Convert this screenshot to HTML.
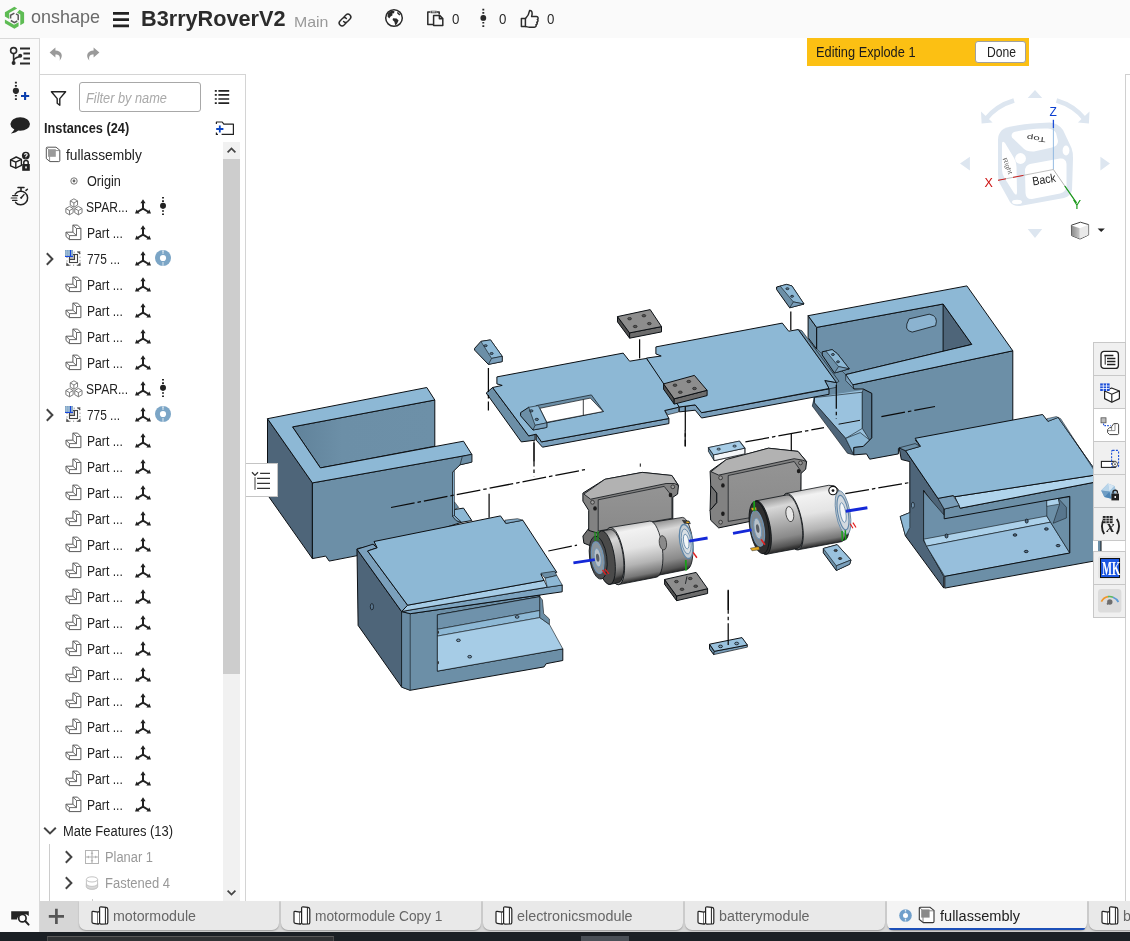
<!DOCTYPE html>
<html lang="en"><head><meta charset="utf-8"><title>B3rryRoverV2 | fullassembly</title>
<style>
*{box-sizing:border-box}
html,body{margin:0;padding:0}
body{width:1130px;height:941px;overflow:hidden;position:relative;background:#fff;font-family:"Liberation Sans",sans-serif;font-size:14px;color:#222}
.abs{position:absolute}
.t{position:absolute;white-space:nowrap;transform-origin:0 0;line-height:16px;display:block}
#hdr{position:absolute;left:0;top:0;width:1130px;height:38px;background:#fafafa}
#side{position:absolute;left:0;top:38px;width:40px;height:894px;background:#fafafa;border-right:1px solid #d9d9d9}
#panel{position:absolute;left:40px;top:74px;width:206px;height:827px;border-top:1px solid #d4d4d4;border-right:1px solid #d4d4d4;background:#fff;overflow:hidden}
#tabs{position:absolute;left:40px;top:901px;width:1090px;height:31px;background:#d6d6d6}
#taskbar{position:absolute;left:0;top:932px;width:1130px;height:9px;background:#1b2025}
.tab{position:absolute;top:0;height:29px;background:#e9e9e9;border-radius:0 0 7px 7px;box-shadow:0 1px 1px rgba(0,0,0,.25)}
svg{position:absolute;overflow:visible}
#root{position:absolute;left:0;top:0;width:1130px;height:941px;will-change:transform;overflow:hidden}

</style></head>
<body><div id="root">
<div id="hdr">
<svg style="left:0;top:0" width="60" height="38" viewBox="0 0 60 38">
 <g fill="#5cb85c" fill-opacity=".98">
  <path d="M14.4 6.8 L17.2 8.4 L9.2 13 L9.2 19 L4.9 16.6 L4.9 12.3 Z" fill="#5bbb51"/>
  <path d="M19.5 9.8 L24.1 12.4 L24.1 23.1 L20.3 25.3 L20.3 14.6 L17 12.7 Z" fill="#5bbb51"/>
  <path d="M4.9 19.6 L14 24.8 L18.6 22.2 L18.6 26.3 L14.4 28.7 L4.9 23.2 Z" fill="#5bbb51"/>
 </g>
 <g fill="none" stroke="#5a5a5a" stroke-width="1.5">
  <path d="M10.6 18.6 L10.6 15.3 L14.4 13.1"/>
  <path d="M16 13.9 L18.2 15.2 L18.2 20.2"/>
  <path d="M17.2 21 L14.4 22.6 L10.8 20.5"/>
 </g>
</svg>
<span class="t" id="logo-t" style="left:31px;top:5px;font-size:18.5px;line-height:24px;color:#6a6a6a;transform:scaleX(.972)">onshape</span>
<svg style="left:112px;top:11px" width="18" height="18" viewBox="0 0 18 18"><path d="M1 2.4h16M1 8.6h16M1 14.8h16" stroke="#222" stroke-width="2.8"/></svg>
<span class="t" id="title-t" style="left:141px;top:6px;font-size:22px;line-height:26px;font-weight:bold;color:#2b2b2b;transform:scaleX(.985)">B3rryRoverV2</span>
<span class="t" id="main-t" style="left:294px;top:12.5px;font-size:15px;line-height:18px;color:#999;transform:scaleX(1.06)">Main</span>
<svg style="left:337px;top:12px" width="16" height="16" viewBox="0 0 16 16" fill="none" stroke="#2b2b2b" stroke-width="1.45" stroke-linecap="round">
 <path d="M7 4.9 L8.9 3 A2.9 2.9 0 0 1 13 7.1 L10.6 9.5 A2.9 2.9 0 0 1 6.6 9.5"/>
 <path d="M9 11.1 L7.1 13 A2.9 2.9 0 0 1 3 8.9 L5.4 6.5 A2.9 2.9 0 0 1 9.4 6.5"/>
</svg>
<svg style="left:384px;top:8px" width="20" height="20" viewBox="0 0 20 20">
 <circle cx="10" cy="10" r="8.3" fill="#fff" stroke="#2b2b2b" stroke-width="1.5"/>
 <path d="M4.2 5 L7.5 2.6 L10.6 3.2 L10 5.2 L8.2 5.6 L8.6 7.2 L6.6 8.4 L5.2 10.4 L3.4 8.2 Z" fill="#2b2b2b"/>
 <path d="M9 10.2 L12.6 10.6 L14.6 12.6 L12.8 16.2 L11.2 17.2 L10.4 13.8 L8.6 12 Z" fill="#2b2b2b"/>
 <path d="M13.4 3.6 L16.4 6.4 L15.4 7.4 L13.2 5.6 Z" fill="#2b2b2b"/>
</svg>
<svg style="left:426px;top:9px" width="19" height="18" viewBox="0 0 19 18" fill="none" stroke="#2b2b2b" stroke-width="1.5" stroke-linejoin="round">
 <path d="M7.4 15.4 H1.8 V3 H4.2 M11 3 H13.2 V5.4"/>
 <rect x="4.6" y="1.8" width="6" height="2.4" fill="#2b2b2b" stroke="none"/>
 <rect x="5.6" y="2.4" width="4" height="1" fill="#fafafa" stroke="none"/>
 <path d="M7.6 6.4 H13.6 L16.8 9.6 V16.4 H7.6 Z" fill="#fafafa"/>
 <path d="M13.4 6.6 V9.8 H16.6"/>
</svg>
<span class="t" style="left:452px;top:11px;font-size:14px;color:#2b2b2b;transform:scaleX(.95)">0</span>
<svg style="left:478px;top:8px" width="10" height="20" viewBox="0 0 10 20"><path d="M5.3 0.8V19" stroke="#2b2b2b" stroke-width="1.9" stroke-dasharray="1.6 1.7"/><circle cx="5.3" cy="9.9" r="2.9" fill="#2b2b2b"/></svg>
<span class="t" style="left:499px;top:11px;font-size:14px;color:#2b2b2b;transform:scaleX(.95)">0</span>
<svg style="left:519px;top:8px" width="22" height="22" viewBox="0 0 22 22" fill="none" stroke="#2b2b2b" stroke-width="1.5" stroke-linejoin="round" stroke-linecap="round">
 <path d="M6.4 10.6 V18.6 H2.4 V10.6 Z"/>
 <path d="M6.4 10.6 C8.6 8.6 10 6.4 10.6 2.6 C13 2.2 13.8 4.6 12.6 8.6 H17.4 C19.4 8.6 19.6 11 18.4 11.4 C19.4 12.2 19.2 13.8 17.8 14.2 C18.6 15.2 18.2 16.6 17 16.8 C17.6 18 16.8 19.2 15.4 19.2 H10.4 C8.8 19.2 7.8 18.6 6.4 18.6"/>
</svg>
<span class="t" style="left:547px;top:11px;font-size:14px;color:#2b2b2b;transform:scaleX(.95)">0</span>
</div>

<div id="side" style="border-top:1px solid #d9d9d9"></div>
<!-- sidebar icons -->
<svg style="left:9px;top:46px" width="22" height="20" viewBox="0 0 22 20" fill="none" stroke="#2a2a2a">
 <circle cx="4.6" cy="4.6" r="3" stroke-width="1.6" fill="#fafafa"/>
 <path d="M4.6 7.8 V16.4" stroke-width="1.6"/>
 <circle cx="4.6" cy="17" r="2" fill="#2a2a2a" stroke="none"/>
 <path d="M4.7 14.6 C4.9 12 7.4 11.4 10.4 10.6" stroke-width="1.6"/>
 <circle cx="11.2" cy="9.8" r="2" fill="#2a2a2a" stroke="none"/>
 <path d="M11 2.6 H21 M14.4 7.4 H21 M14.4 12.4 H21 M11 17.4 H21" stroke-width="2"/>
</svg>
<svg style="left:9px;top:80px" width="22" height="22" viewBox="0 0 22 22">
 <path d="M6.9 1.8 V20.2" stroke="#2a2a2a" stroke-width="2" stroke-dasharray="1.6 1.7"/>
 <circle cx="6.9" cy="10.8" r="3.1" fill="#2a2a2a"/>
 <path d="M12 16 H20.2 M16.1 11.9 V20.1" stroke="#0b3fae" stroke-width="2.1"/>
</svg>
<svg style="left:9px;top:116px" width="22" height="20" viewBox="0 0 22 20">
 <ellipse cx="11.2" cy="8" rx="9.8" ry="6.8" fill="#222"/>
 <path d="M5.6 11.6 C5.4 14.4 3.8 16.2 1.8 17.6 C5.6 17.4 8.4 15.8 10 13.6 Z" fill="#222"/>
</svg>
<svg style="left:9px;top:150px" width="23" height="22" viewBox="0 0 23 22" fill="none" stroke="#222" stroke-width="1.4" stroke-linejoin="round">
 <path d="M1.6 9.8 L7.2 7 L12.4 9.4 L12.4 15.4 L6.8 18.2 L1.6 15.8 Z"/>
 <path d="M1.6 9.8 L6.8 12.2 L12.4 9.4 M6.8 12.2 V18.2"/>
 <circle cx="16.8" cy="5.6" r="3.9" fill="#222" stroke="none"/>
 <path d="M15.5 4.8 C15.5 3.2 18.2 3.2 18.2 4.8 C18.2 5.8 16.8 5.8 16.8 6.9 M16.8 7.8 V8.2" stroke="#fafafa" stroke-width="1.1"/>
 <rect x="13.2" y="14" width="7.6" height="6.8" fill="#222" stroke="none"/>
 <path d="M14.8 14 V12.4 C14.8 10 19.2 10 19.2 12.4 V14" stroke-width="1.5"/>
 <rect x="16.2" y="16.4" width="1.6" height="2" fill="#fafafa" stroke="none"/>
</svg>
<svg style="left:9px;top:185px" width="22" height="22" viewBox="0 0 22 22" fill="none" stroke="#222" stroke-width="1.5" stroke-linecap="round">
 <path d="M6.2 9.2 A6.8 6.8 0 1 1 6.6 17.4"/>
 <path d="M9 2.6 H15 M12 2.8 V5.6 M17 5.4 L18.4 4.2"/>
 <path d="M12.2 12.8 L15 9.6" stroke-width="1.4"/>
 <circle cx="12.2" cy="12.8" r="1" fill="#222" stroke="none"/>
 <path d="M3.6 10.6 H8.6 M2.2 13 H7.8 M3.6 15.4 H8" stroke-width="1.2"/>
</svg>
<!-- bottom-left search icon -->
<svg style="left:9px;top:905px" width="24" height="22" viewBox="0 0 24 22">
 <path d="M2.2 6.2 H19.8 V11 L17.6 9.6 H11.6 L8.2 13 V14.4 H2.2 Z" fill="#222"/>
 <circle cx="13.4" cy="13.2" r="3.7" fill="#fafafa" stroke="#222" stroke-width="1.7"/>
 <path d="M16.2 16 L19.6 19.6" stroke="#222" stroke-width="2" stroke-linecap="round"/>
</svg>
<!-- undo / redo -->
<svg style="left:48px;top:46px" width="18" height="18" viewBox="0 0 18 18"><path d="M7.4 1.6 L1.6 6.6 L7.4 11.4 V8.4 C11 8.2 12.6 10.2 11.6 14.8 C16 9.6 13.4 4.8 7.4 4.6 Z" fill="#9a9a9a"/></svg>
<svg style="left:83px;top:46px" width="18" height="18" viewBox="0 0 18 18"><path d="M10.6 1.6 L16.4 6.6 L10.6 11.4 V8.4 C7 8.2 5.4 10.2 6.4 14.8 C2 9.6 4.6 4.8 10.6 4.6 Z" fill="#9a9a9a"/></svg>

<div id="panel">
<svg style="left:9px;top:14px" width="19" height="19" viewBox="0 0 19 19" ><path d="M2.4 2.7 H16.6 L10.8 9.6 V16.2 L8.2 14.2 V9.6 Z" fill="none" stroke="#222" stroke-width="1.4" stroke-linejoin="round"/></svg>
<div class="abs" style="left:39px;top:7px;width:122px;height:30px;border:1px solid #a8a8a8;border-radius:3px;background:#fff"></div>
<span class="t" style="left:46.0px;top:15.00px;font-size:14px;line-height:16px;color:#a9a9a9;font-weight:normal;font-style:italic;transform:scaleX(0.913)">Filter by name</span>
<svg style="left:173px;top:13px" width="18" height="18" viewBox="0 0 18 18" ><path d="M5.4 2.8 H16.2 M5.4 6.9 H16.2 M5.4 11 H16.2 M5.4 15.1 H16.2" stroke="#222" stroke-width="1.7"/><path d="M1.8 2.8 H3.8 M1.8 6.9 H3.8 M1.8 11 H3.8 M1.8 15.1 H3.8" stroke="#222" stroke-width="1.7"/></svg>
<span class="t" style="left:4.0px;top:45.00px;font-size:14px;line-height:16px;color:#222;font-weight:bold;font-style:normal;transform:scaleX(0.912)">Instances (24)</span>
<svg style="left:174px;top:44px" width="22" height="18" viewBox="0 0 22 18" ><path d="M2.4 5 V3 H8.2 L9.8 5.2 H19.4 V15.4 H7.6" fill="none" stroke="#222" stroke-width="1.2" stroke-linejoin="round"/><path d="M2.4 13.4 V15.4 H4" fill="none" stroke="#222" stroke-width="1.2"/><path d="M2.2 10 H9.4 M5.8 6.4 V13.6" stroke="#0b45c4" stroke-width="1.8"/></svg>
<div class="abs" style="left:183px;top:67px;width:17px;height:759px;background:#f1f1f1"></div>
<div class="abs" style="left:183px;top:84px;width:17px;height:515px;background:#cdcdcd"></div>
<svg style="left:183px;top:67px" width="17" height="17" viewBox="0 0 17 17" ><path d="M4.6 10.4 L8.5 6.4 L12.4 10.4" fill="none" stroke="#444" stroke-width="1.7"/></svg>
<svg style="left:183px;top:809px" width="17" height="17" viewBox="0 0 17 17" ><path d="M4.6 6.6 L8.5 10.6 L12.4 6.6" fill="none" stroke="#444" stroke-width="1.7"/></svg>
<svg style="left:5px;top:71px" width="17" height="17" viewBox="0 0 17 17" ><path d="M1.3 2.2 Q1.3 1.2 2.4 1.2 H11 L14.8 4.2 V14.6 Q14.8 15.6 13.8 15.6 H5 L1.3 12.6 Z" fill="#fff" stroke="#555" stroke-width="1"/><path d="M4.6 4.6 H14.6 M4.6 4.6 V15.4 M4.6 4.6 L1.6 1.6" fill="none" stroke="#777" stroke-width=".8"/><rect x="3" y="3.2" width="7.8" height="7.6" fill="#9a9a9a"/></svg>
<span class="t" style="left:26.0px;top:72.00px;font-size:14px;line-height:16px;color:#222;font-weight:normal;font-style:normal;transform:scaleX(0.984)">fullassembly</span>
<svg style="left:28.5px;top:100.5px" width="10" height="10" viewBox="0 0 10 10" ><circle cx="5" cy="5" r="3.2" fill="#fff" stroke="#666" stroke-width=".9"/><circle cx="5" cy="5" r="1.4" fill="#666"/></svg>
<span class="t" style="left:46.5px;top:98.00px;font-size:14px;line-height:16px;color:#222;font-weight:normal;font-style:normal;transform:scaleX(0.905)">Origin</span>
<svg style="left:24.5px;top:122.5px" width="18" height="18" viewBox="0 0 18 18" ><g fill="#fff" stroke="#6e6e6e" stroke-width=".9" stroke-linejoin="round"><path d="M8.9 0.7999999999999998 L12.55 2.9 V7.1 L8.9 9.2 L5.25 7.1 V2.9 Z M5.25 2.9 L8.9 5.0 L12.55 2.9 M8.9 5.0 V9.2"/><path d="M4.5 8.399999999999999 L8.15 10.5 V14.7 L4.5 16.8 L0.85 14.7 V10.5 Z M0.85 10.5 L4.5 12.6 L8.15 10.5 M4.5 12.6 V16.8"/><path d="M13.4 8.399999999999999 L17.05 10.5 V14.7 L13.4 16.8 L9.75 14.7 V10.5 Z M9.75 10.5 L13.4 12.6 L17.05 10.5 M13.4 12.6 V16.8"/></g></svg>
<span class="t" style="left:46.2px;top:124.00px;font-size:14px;line-height:16px;color:#222;font-weight:normal;font-style:normal;transform:scaleX(0.861)">SPAR...</span>
<svg style="left:94px;top:122.5px" width="18" height="18" viewBox="0 0 18 18" ><g stroke="#222" stroke-width="2" fill="#222"><path d="M9 10.6 V4 M9 10.6 L3.4 14 M9 10.6 L14.6 14" fill="none"/><path d="M9 1.2 L11.6 5.2 H6.4 Z M1 15.6 L2.6 11.4 L5.6 15.4 Z M17 15.6 L15.4 11.4 L12.4 15.4 Z" stroke="none"/></g></svg>
<svg style="left:117.9px;top:121px" width="10" height="20" viewBox="0 0 10 20" ><path d="M5 1 V19" stroke="#222" stroke-width="1.9" stroke-dasharray="1.6 1.7"/><circle cx="5" cy="9.8" r="3" fill="#222"/></svg>
<svg style="left:25px;top:149px" width="18" height="18" viewBox="0 0 18 18" ><g fill="#fff" stroke="#5a5a5a" stroke-width="1" stroke-linejoin="round"><path d="M1 8.2 H7.9 V1.1 H12.5 L15.9 4.5 V15.6 H4.4 L1 12.5 Z"/><path d="M4.4 15.6 V11.6 H11.5 V4.5 H15.9 M1 8.2 L4.4 11.6 M7.9 8.2 L11.5 11.6 M7.9 1.1 L11.5 4.5" fill="none" stroke-width=".9"/></g></svg>
<span class="t" style="left:46.5px;top:150.00px;font-size:14px;line-height:16px;color:#222;font-weight:normal;font-style:normal;transform:scaleX(0.868)">Part ...</span>
<svg style="left:94px;top:148.5px" width="18" height="18" viewBox="0 0 18 18" ><g stroke="#222" stroke-width="2" fill="#222"><path d="M9 10.6 V4 M9 10.6 L3.4 14 M9 10.6 L14.6 14" fill="none"/><path d="M9 1.2 L11.6 5.2 H6.4 Z M1 15.6 L2.6 11.4 L5.6 15.4 Z M17 15.6 L15.4 11.4 L12.4 15.4 Z" stroke="none"/></g></svg>
<svg style="left:5.399999999999999px;top:176px" width="10" height="16" viewBox="0 0 10 16" ><path d="M1.8 2.2 L7.4 8 L1.8 13.8" fill="none" stroke="#444" stroke-width="2"/></svg>
<svg style="left:25px;top:175px" width="18" height="18" viewBox="0 0 18 18" ><rect x="2" y="2.2" width="13" height="13" fill="none" stroke="#777" stroke-width="1" stroke-dasharray="1 2.6" stroke-dashoffset=".5"/><path d="M11.8 1.6 L15.4 1.2 L15 4.6 Z M1.4 12.2 L1.2 16 L5 15.8 Z M15.4 12.2 L15.6 16 L11.8 15.8 Z" fill="#555"/><rect x="4.5" y="4.5" width="8" height="8" fill="#fff" stroke="#444" stroke-width="1.1"/><rect x="4.5" y="4.5" width="5" height="5" fill="#b8b8b8" stroke="#444" stroke-width="1.1"/><rect x="0" y="0" width="8" height="6.2" fill="#7fa3c4"/><path d="M1.6 0 V6 M3.8 0 V6 M0 2 H8 M0 4.1 H8" stroke="#a9c4dc" stroke-width=".7"/><path d="M5.5 0 V7 M0 6.5 H8" stroke="#1747e0" stroke-width="1"/></svg>
<span class="t" style="left:46.5px;top:176.00px;font-size:14px;line-height:16px;color:#222;font-weight:normal;font-style:normal;transform:scaleX(0.848)">775 ...</span>
<svg style="left:94px;top:174.5px" width="18" height="18" viewBox="0 0 18 18" ><g stroke="#222" stroke-width="2" fill="#222"><path d="M9 10.6 V4 M9 10.6 L3.4 14 M9 10.6 L14.6 14" fill="none"/><path d="M9 1.2 L11.6 5.2 H6.4 Z M1 15.6 L2.6 11.4 L5.6 15.4 Z M17 15.6 L15.4 11.4 L12.4 15.4 Z" stroke="none"/></g></svg>
<svg style="left:113.9px;top:174px" width="18" height="18" viewBox="0 0 18 18" ><circle cx="9" cy="9" r="8" fill="#7ba5c6"/><circle cx="9" cy="9" r="3.1" fill="#fff"/><path d="M9 1.6 V4.6 M9 13.4 V16.4" stroke="#fff" stroke-width="1.5" stroke-dasharray="1.2 .8"/></svg>
<svg style="left:25px;top:201px" width="18" height="18" viewBox="0 0 18 18" ><g fill="#fff" stroke="#5a5a5a" stroke-width="1" stroke-linejoin="round"><path d="M1 8.2 H7.9 V1.1 H12.5 L15.9 4.5 V15.6 H4.4 L1 12.5 Z"/><path d="M4.4 15.6 V11.6 H11.5 V4.5 H15.9 M1 8.2 L4.4 11.6 M7.9 8.2 L11.5 11.6 M7.9 1.1 L11.5 4.5" fill="none" stroke-width=".9"/></g></svg>
<span class="t" style="left:46.5px;top:202.00px;font-size:14px;line-height:16px;color:#222;font-weight:normal;font-style:normal;transform:scaleX(0.868)">Part ...</span>
<svg style="left:94px;top:200.5px" width="18" height="18" viewBox="0 0 18 18" ><g stroke="#222" stroke-width="2" fill="#222"><path d="M9 10.6 V4 M9 10.6 L3.4 14 M9 10.6 L14.6 14" fill="none"/><path d="M9 1.2 L11.6 5.2 H6.4 Z M1 15.6 L2.6 11.4 L5.6 15.4 Z M17 15.6 L15.4 11.4 L12.4 15.4 Z" stroke="none"/></g></svg>
<svg style="left:25px;top:227px" width="18" height="18" viewBox="0 0 18 18" ><g fill="#fff" stroke="#5a5a5a" stroke-width="1" stroke-linejoin="round"><path d="M1 8.2 H7.9 V1.1 H12.5 L15.9 4.5 V15.6 H4.4 L1 12.5 Z"/><path d="M4.4 15.6 V11.6 H11.5 V4.5 H15.9 M1 8.2 L4.4 11.6 M7.9 8.2 L11.5 11.6 M7.9 1.1 L11.5 4.5" fill="none" stroke-width=".9"/></g></svg>
<span class="t" style="left:46.5px;top:228.00px;font-size:14px;line-height:16px;color:#222;font-weight:normal;font-style:normal;transform:scaleX(0.868)">Part ...</span>
<svg style="left:94px;top:226.5px" width="18" height="18" viewBox="0 0 18 18" ><g stroke="#222" stroke-width="2" fill="#222"><path d="M9 10.6 V4 M9 10.6 L3.4 14 M9 10.6 L14.6 14" fill="none"/><path d="M9 1.2 L11.6 5.2 H6.4 Z M1 15.6 L2.6 11.4 L5.6 15.4 Z M17 15.6 L15.4 11.4 L12.4 15.4 Z" stroke="none"/></g></svg>
<svg style="left:25px;top:253px" width="18" height="18" viewBox="0 0 18 18" ><g fill="#fff" stroke="#5a5a5a" stroke-width="1" stroke-linejoin="round"><path d="M1 8.2 H7.9 V1.1 H12.5 L15.9 4.5 V15.6 H4.4 L1 12.5 Z"/><path d="M4.4 15.6 V11.6 H11.5 V4.5 H15.9 M1 8.2 L4.4 11.6 M7.9 8.2 L11.5 11.6 M7.9 1.1 L11.5 4.5" fill="none" stroke-width=".9"/></g></svg>
<span class="t" style="left:46.5px;top:254.00px;font-size:14px;line-height:16px;color:#222;font-weight:normal;font-style:normal;transform:scaleX(0.868)">Part ...</span>
<svg style="left:94px;top:252.5px" width="18" height="18" viewBox="0 0 18 18" ><g stroke="#222" stroke-width="2" fill="#222"><path d="M9 10.6 V4 M9 10.6 L3.4 14 M9 10.6 L14.6 14" fill="none"/><path d="M9 1.2 L11.6 5.2 H6.4 Z M1 15.6 L2.6 11.4 L5.6 15.4 Z M17 15.6 L15.4 11.4 L12.4 15.4 Z" stroke="none"/></g></svg>
<svg style="left:25px;top:279px" width="18" height="18" viewBox="0 0 18 18" ><g fill="#fff" stroke="#5a5a5a" stroke-width="1" stroke-linejoin="round"><path d="M1 8.2 H7.9 V1.1 H12.5 L15.9 4.5 V15.6 H4.4 L1 12.5 Z"/><path d="M4.4 15.6 V11.6 H11.5 V4.5 H15.9 M1 8.2 L4.4 11.6 M7.9 8.2 L11.5 11.6 M7.9 1.1 L11.5 4.5" fill="none" stroke-width=".9"/></g></svg>
<span class="t" style="left:46.5px;top:280.00px;font-size:14px;line-height:16px;color:#222;font-weight:normal;font-style:normal;transform:scaleX(0.868)">Part ...</span>
<svg style="left:94px;top:278.5px" width="18" height="18" viewBox="0 0 18 18" ><g stroke="#222" stroke-width="2" fill="#222"><path d="M9 10.6 V4 M9 10.6 L3.4 14 M9 10.6 L14.6 14" fill="none"/><path d="M9 1.2 L11.6 5.2 H6.4 Z M1 15.6 L2.6 11.4 L5.6 15.4 Z M17 15.6 L15.4 11.4 L12.4 15.4 Z" stroke="none"/></g></svg>
<svg style="left:24.5px;top:304.5px" width="18" height="18" viewBox="0 0 18 18" ><g fill="#fff" stroke="#6e6e6e" stroke-width=".9" stroke-linejoin="round"><path d="M8.9 0.7999999999999998 L12.55 2.9 V7.1 L8.9 9.2 L5.25 7.1 V2.9 Z M5.25 2.9 L8.9 5.0 L12.55 2.9 M8.9 5.0 V9.2"/><path d="M4.5 8.399999999999999 L8.15 10.5 V14.7 L4.5 16.8 L0.85 14.7 V10.5 Z M0.85 10.5 L4.5 12.6 L8.15 10.5 M4.5 12.6 V16.8"/><path d="M13.4 8.399999999999999 L17.05 10.5 V14.7 L13.4 16.8 L9.75 14.7 V10.5 Z M9.75 10.5 L13.4 12.6 L17.05 10.5 M13.4 12.6 V16.8"/></g></svg>
<span class="t" style="left:46.2px;top:306.00px;font-size:14px;line-height:16px;color:#222;font-weight:normal;font-style:normal;transform:scaleX(0.861)">SPAR...</span>
<svg style="left:94px;top:304.5px" width="18" height="18" viewBox="0 0 18 18" ><g stroke="#222" stroke-width="2" fill="#222"><path d="M9 10.6 V4 M9 10.6 L3.4 14 M9 10.6 L14.6 14" fill="none"/><path d="M9 1.2 L11.6 5.2 H6.4 Z M1 15.6 L2.6 11.4 L5.6 15.4 Z M17 15.6 L15.4 11.4 L12.4 15.4 Z" stroke="none"/></g></svg>
<svg style="left:117.9px;top:303px" width="10" height="20" viewBox="0 0 10 20" ><path d="M5 1 V19" stroke="#222" stroke-width="1.9" stroke-dasharray="1.6 1.7"/><circle cx="5" cy="9.8" r="3" fill="#222"/></svg>
<svg style="left:5.399999999999999px;top:332px" width="10" height="16" viewBox="0 0 10 16" ><path d="M1.8 2.2 L7.4 8 L1.8 13.8" fill="none" stroke="#444" stroke-width="2"/></svg>
<svg style="left:25px;top:331px" width="18" height="18" viewBox="0 0 18 18" ><rect x="2" y="2.2" width="13" height="13" fill="none" stroke="#777" stroke-width="1" stroke-dasharray="1 2.6" stroke-dashoffset=".5"/><path d="M11.8 1.6 L15.4 1.2 L15 4.6 Z M1.4 12.2 L1.2 16 L5 15.8 Z M15.4 12.2 L15.6 16 L11.8 15.8 Z" fill="#555"/><rect x="4.5" y="4.5" width="8" height="8" fill="#fff" stroke="#444" stroke-width="1.1"/><rect x="4.5" y="4.5" width="5" height="5" fill="#b8b8b8" stroke="#444" stroke-width="1.1"/><rect x="0" y="0" width="8" height="6.2" fill="#7fa3c4"/><path d="M1.6 0 V6 M3.8 0 V6 M0 2 H8 M0 4.1 H8" stroke="#a9c4dc" stroke-width=".7"/><path d="M5.5 0 V7 M0 6.5 H8" stroke="#1747e0" stroke-width="1"/></svg>
<span class="t" style="left:46.5px;top:332.00px;font-size:14px;line-height:16px;color:#222;font-weight:normal;font-style:normal;transform:scaleX(0.848)">775 ...</span>
<svg style="left:94px;top:330.5px" width="18" height="18" viewBox="0 0 18 18" ><g stroke="#222" stroke-width="2" fill="#222"><path d="M9 10.6 V4 M9 10.6 L3.4 14 M9 10.6 L14.6 14" fill="none"/><path d="M9 1.2 L11.6 5.2 H6.4 Z M1 15.6 L2.6 11.4 L5.6 15.4 Z M17 15.6 L15.4 11.4 L12.4 15.4 Z" stroke="none"/></g></svg>
<svg style="left:113.9px;top:330px" width="18" height="18" viewBox="0 0 18 18" ><circle cx="9" cy="9" r="8" fill="#7ba5c6"/><circle cx="9" cy="9" r="3.1" fill="#fff"/><path d="M9 1.6 V4.6 M9 13.4 V16.4" stroke="#fff" stroke-width="1.5" stroke-dasharray="1.2 .8"/></svg>
<svg style="left:25px;top:357px" width="18" height="18" viewBox="0 0 18 18" ><g fill="#fff" stroke="#5a5a5a" stroke-width="1" stroke-linejoin="round"><path d="M1 8.2 H7.9 V1.1 H12.5 L15.9 4.5 V15.6 H4.4 L1 12.5 Z"/><path d="M4.4 15.6 V11.6 H11.5 V4.5 H15.9 M1 8.2 L4.4 11.6 M7.9 8.2 L11.5 11.6 M7.9 1.1 L11.5 4.5" fill="none" stroke-width=".9"/></g></svg>
<span class="t" style="left:46.5px;top:358.00px;font-size:14px;line-height:16px;color:#222;font-weight:normal;font-style:normal;transform:scaleX(0.868)">Part ...</span>
<svg style="left:94px;top:356.5px" width="18" height="18" viewBox="0 0 18 18" ><g stroke="#222" stroke-width="2" fill="#222"><path d="M9 10.6 V4 M9 10.6 L3.4 14 M9 10.6 L14.6 14" fill="none"/><path d="M9 1.2 L11.6 5.2 H6.4 Z M1 15.6 L2.6 11.4 L5.6 15.4 Z M17 15.6 L15.4 11.4 L12.4 15.4 Z" stroke="none"/></g></svg>
<svg style="left:25px;top:383px" width="18" height="18" viewBox="0 0 18 18" ><g fill="#fff" stroke="#5a5a5a" stroke-width="1" stroke-linejoin="round"><path d="M1 8.2 H7.9 V1.1 H12.5 L15.9 4.5 V15.6 H4.4 L1 12.5 Z"/><path d="M4.4 15.6 V11.6 H11.5 V4.5 H15.9 M1 8.2 L4.4 11.6 M7.9 8.2 L11.5 11.6 M7.9 1.1 L11.5 4.5" fill="none" stroke-width=".9"/></g></svg>
<span class="t" style="left:46.5px;top:384.00px;font-size:14px;line-height:16px;color:#222;font-weight:normal;font-style:normal;transform:scaleX(0.868)">Part ...</span>
<svg style="left:94px;top:382.5px" width="18" height="18" viewBox="0 0 18 18" ><g stroke="#222" stroke-width="2" fill="#222"><path d="M9 10.6 V4 M9 10.6 L3.4 14 M9 10.6 L14.6 14" fill="none"/><path d="M9 1.2 L11.6 5.2 H6.4 Z M1 15.6 L2.6 11.4 L5.6 15.4 Z M17 15.6 L15.4 11.4 L12.4 15.4 Z" stroke="none"/></g></svg>
<svg style="left:25px;top:409px" width="18" height="18" viewBox="0 0 18 18" ><g fill="#fff" stroke="#5a5a5a" stroke-width="1" stroke-linejoin="round"><path d="M1 8.2 H7.9 V1.1 H12.5 L15.9 4.5 V15.6 H4.4 L1 12.5 Z"/><path d="M4.4 15.6 V11.6 H11.5 V4.5 H15.9 M1 8.2 L4.4 11.6 M7.9 8.2 L11.5 11.6 M7.9 1.1 L11.5 4.5" fill="none" stroke-width=".9"/></g></svg>
<span class="t" style="left:46.5px;top:410.00px;font-size:14px;line-height:16px;color:#222;font-weight:normal;font-style:normal;transform:scaleX(0.868)">Part ...</span>
<svg style="left:94px;top:408.5px" width="18" height="18" viewBox="0 0 18 18" ><g stroke="#222" stroke-width="2" fill="#222"><path d="M9 10.6 V4 M9 10.6 L3.4 14 M9 10.6 L14.6 14" fill="none"/><path d="M9 1.2 L11.6 5.2 H6.4 Z M1 15.6 L2.6 11.4 L5.6 15.4 Z M17 15.6 L15.4 11.4 L12.4 15.4 Z" stroke="none"/></g></svg>
<svg style="left:25px;top:435px" width="18" height="18" viewBox="0 0 18 18" ><g fill="#fff" stroke="#5a5a5a" stroke-width="1" stroke-linejoin="round"><path d="M1 8.2 H7.9 V1.1 H12.5 L15.9 4.5 V15.6 H4.4 L1 12.5 Z"/><path d="M4.4 15.6 V11.6 H11.5 V4.5 H15.9 M1 8.2 L4.4 11.6 M7.9 8.2 L11.5 11.6 M7.9 1.1 L11.5 4.5" fill="none" stroke-width=".9"/></g></svg>
<span class="t" style="left:46.5px;top:436.00px;font-size:14px;line-height:16px;color:#222;font-weight:normal;font-style:normal;transform:scaleX(0.868)">Part ...</span>
<svg style="left:94px;top:434.5px" width="18" height="18" viewBox="0 0 18 18" ><g stroke="#222" stroke-width="2" fill="#222"><path d="M9 10.6 V4 M9 10.6 L3.4 14 M9 10.6 L14.6 14" fill="none"/><path d="M9 1.2 L11.6 5.2 H6.4 Z M1 15.6 L2.6 11.4 L5.6 15.4 Z M17 15.6 L15.4 11.4 L12.4 15.4 Z" stroke="none"/></g></svg>
<svg style="left:25px;top:461px" width="18" height="18" viewBox="0 0 18 18" ><g fill="#fff" stroke="#5a5a5a" stroke-width="1" stroke-linejoin="round"><path d="M1 8.2 H7.9 V1.1 H12.5 L15.9 4.5 V15.6 H4.4 L1 12.5 Z"/><path d="M4.4 15.6 V11.6 H11.5 V4.5 H15.9 M1 8.2 L4.4 11.6 M7.9 8.2 L11.5 11.6 M7.9 1.1 L11.5 4.5" fill="none" stroke-width=".9"/></g></svg>
<span class="t" style="left:46.5px;top:462.00px;font-size:14px;line-height:16px;color:#222;font-weight:normal;font-style:normal;transform:scaleX(0.868)">Part ...</span>
<svg style="left:94px;top:460.5px" width="18" height="18" viewBox="0 0 18 18" ><g stroke="#222" stroke-width="2" fill="#222"><path d="M9 10.6 V4 M9 10.6 L3.4 14 M9 10.6 L14.6 14" fill="none"/><path d="M9 1.2 L11.6 5.2 H6.4 Z M1 15.6 L2.6 11.4 L5.6 15.4 Z M17 15.6 L15.4 11.4 L12.4 15.4 Z" stroke="none"/></g></svg>
<svg style="left:25px;top:487px" width="18" height="18" viewBox="0 0 18 18" ><g fill="#fff" stroke="#5a5a5a" stroke-width="1" stroke-linejoin="round"><path d="M1 8.2 H7.9 V1.1 H12.5 L15.9 4.5 V15.6 H4.4 L1 12.5 Z"/><path d="M4.4 15.6 V11.6 H11.5 V4.5 H15.9 M1 8.2 L4.4 11.6 M7.9 8.2 L11.5 11.6 M7.9 1.1 L11.5 4.5" fill="none" stroke-width=".9"/></g></svg>
<span class="t" style="left:46.5px;top:488.00px;font-size:14px;line-height:16px;color:#222;font-weight:normal;font-style:normal;transform:scaleX(0.868)">Part ...</span>
<svg style="left:94px;top:486.5px" width="18" height="18" viewBox="0 0 18 18" ><g stroke="#222" stroke-width="2" fill="#222"><path d="M9 10.6 V4 M9 10.6 L3.4 14 M9 10.6 L14.6 14" fill="none"/><path d="M9 1.2 L11.6 5.2 H6.4 Z M1 15.6 L2.6 11.4 L5.6 15.4 Z M17 15.6 L15.4 11.4 L12.4 15.4 Z" stroke="none"/></g></svg>
<svg style="left:25px;top:513px" width="18" height="18" viewBox="0 0 18 18" ><g fill="#fff" stroke="#5a5a5a" stroke-width="1" stroke-linejoin="round"><path d="M1 8.2 H7.9 V1.1 H12.5 L15.9 4.5 V15.6 H4.4 L1 12.5 Z"/><path d="M4.4 15.6 V11.6 H11.5 V4.5 H15.9 M1 8.2 L4.4 11.6 M7.9 8.2 L11.5 11.6 M7.9 1.1 L11.5 4.5" fill="none" stroke-width=".9"/></g></svg>
<span class="t" style="left:46.5px;top:514.00px;font-size:14px;line-height:16px;color:#222;font-weight:normal;font-style:normal;transform:scaleX(0.868)">Part ...</span>
<svg style="left:94px;top:512.5px" width="18" height="18" viewBox="0 0 18 18" ><g stroke="#222" stroke-width="2" fill="#222"><path d="M9 10.6 V4 M9 10.6 L3.4 14 M9 10.6 L14.6 14" fill="none"/><path d="M9 1.2 L11.6 5.2 H6.4 Z M1 15.6 L2.6 11.4 L5.6 15.4 Z M17 15.6 L15.4 11.4 L12.4 15.4 Z" stroke="none"/></g></svg>
<svg style="left:25px;top:539px" width="18" height="18" viewBox="0 0 18 18" ><g fill="#fff" stroke="#5a5a5a" stroke-width="1" stroke-linejoin="round"><path d="M1 8.2 H7.9 V1.1 H12.5 L15.9 4.5 V15.6 H4.4 L1 12.5 Z"/><path d="M4.4 15.6 V11.6 H11.5 V4.5 H15.9 M1 8.2 L4.4 11.6 M7.9 8.2 L11.5 11.6 M7.9 1.1 L11.5 4.5" fill="none" stroke-width=".9"/></g></svg>
<span class="t" style="left:46.5px;top:540.00px;font-size:14px;line-height:16px;color:#222;font-weight:normal;font-style:normal;transform:scaleX(0.868)">Part ...</span>
<svg style="left:94px;top:538.5px" width="18" height="18" viewBox="0 0 18 18" ><g stroke="#222" stroke-width="2" fill="#222"><path d="M9 10.6 V4 M9 10.6 L3.4 14 M9 10.6 L14.6 14" fill="none"/><path d="M9 1.2 L11.6 5.2 H6.4 Z M1 15.6 L2.6 11.4 L5.6 15.4 Z M17 15.6 L15.4 11.4 L12.4 15.4 Z" stroke="none"/></g></svg>
<svg style="left:25px;top:565px" width="18" height="18" viewBox="0 0 18 18" ><g fill="#fff" stroke="#5a5a5a" stroke-width="1" stroke-linejoin="round"><path d="M1 8.2 H7.9 V1.1 H12.5 L15.9 4.5 V15.6 H4.4 L1 12.5 Z"/><path d="M4.4 15.6 V11.6 H11.5 V4.5 H15.9 M1 8.2 L4.4 11.6 M7.9 8.2 L11.5 11.6 M7.9 1.1 L11.5 4.5" fill="none" stroke-width=".9"/></g></svg>
<span class="t" style="left:46.5px;top:566.00px;font-size:14px;line-height:16px;color:#222;font-weight:normal;font-style:normal;transform:scaleX(0.868)">Part ...</span>
<svg style="left:94px;top:564.5px" width="18" height="18" viewBox="0 0 18 18" ><g stroke="#222" stroke-width="2" fill="#222"><path d="M9 10.6 V4 M9 10.6 L3.4 14 M9 10.6 L14.6 14" fill="none"/><path d="M9 1.2 L11.6 5.2 H6.4 Z M1 15.6 L2.6 11.4 L5.6 15.4 Z M17 15.6 L15.4 11.4 L12.4 15.4 Z" stroke="none"/></g></svg>
<svg style="left:25px;top:591px" width="18" height="18" viewBox="0 0 18 18" ><g fill="#fff" stroke="#5a5a5a" stroke-width="1" stroke-linejoin="round"><path d="M1 8.2 H7.9 V1.1 H12.5 L15.9 4.5 V15.6 H4.4 L1 12.5 Z"/><path d="M4.4 15.6 V11.6 H11.5 V4.5 H15.9 M1 8.2 L4.4 11.6 M7.9 8.2 L11.5 11.6 M7.9 1.1 L11.5 4.5" fill="none" stroke-width=".9"/></g></svg>
<span class="t" style="left:46.5px;top:592.00px;font-size:14px;line-height:16px;color:#222;font-weight:normal;font-style:normal;transform:scaleX(0.868)">Part ...</span>
<svg style="left:94px;top:590.5px" width="18" height="18" viewBox="0 0 18 18" ><g stroke="#222" stroke-width="2" fill="#222"><path d="M9 10.6 V4 M9 10.6 L3.4 14 M9 10.6 L14.6 14" fill="none"/><path d="M9 1.2 L11.6 5.2 H6.4 Z M1 15.6 L2.6 11.4 L5.6 15.4 Z M17 15.6 L15.4 11.4 L12.4 15.4 Z" stroke="none"/></g></svg>
<svg style="left:25px;top:617px" width="18" height="18" viewBox="0 0 18 18" ><g fill="#fff" stroke="#5a5a5a" stroke-width="1" stroke-linejoin="round"><path d="M1 8.2 H7.9 V1.1 H12.5 L15.9 4.5 V15.6 H4.4 L1 12.5 Z"/><path d="M4.4 15.6 V11.6 H11.5 V4.5 H15.9 M1 8.2 L4.4 11.6 M7.9 8.2 L11.5 11.6 M7.9 1.1 L11.5 4.5" fill="none" stroke-width=".9"/></g></svg>
<span class="t" style="left:46.5px;top:618.00px;font-size:14px;line-height:16px;color:#222;font-weight:normal;font-style:normal;transform:scaleX(0.868)">Part ...</span>
<svg style="left:94px;top:616.5px" width="18" height="18" viewBox="0 0 18 18" ><g stroke="#222" stroke-width="2" fill="#222"><path d="M9 10.6 V4 M9 10.6 L3.4 14 M9 10.6 L14.6 14" fill="none"/><path d="M9 1.2 L11.6 5.2 H6.4 Z M1 15.6 L2.6 11.4 L5.6 15.4 Z M17 15.6 L15.4 11.4 L12.4 15.4 Z" stroke="none"/></g></svg>
<svg style="left:25px;top:643px" width="18" height="18" viewBox="0 0 18 18" ><g fill="#fff" stroke="#5a5a5a" stroke-width="1" stroke-linejoin="round"><path d="M1 8.2 H7.9 V1.1 H12.5 L15.9 4.5 V15.6 H4.4 L1 12.5 Z"/><path d="M4.4 15.6 V11.6 H11.5 V4.5 H15.9 M1 8.2 L4.4 11.6 M7.9 8.2 L11.5 11.6 M7.9 1.1 L11.5 4.5" fill="none" stroke-width=".9"/></g></svg>
<span class="t" style="left:46.5px;top:644.00px;font-size:14px;line-height:16px;color:#222;font-weight:normal;font-style:normal;transform:scaleX(0.868)">Part ...</span>
<svg style="left:94px;top:642.5px" width="18" height="18" viewBox="0 0 18 18" ><g stroke="#222" stroke-width="2" fill="#222"><path d="M9 10.6 V4 M9 10.6 L3.4 14 M9 10.6 L14.6 14" fill="none"/><path d="M9 1.2 L11.6 5.2 H6.4 Z M1 15.6 L2.6 11.4 L5.6 15.4 Z M17 15.6 L15.4 11.4 L12.4 15.4 Z" stroke="none"/></g></svg>
<svg style="left:25px;top:669px" width="18" height="18" viewBox="0 0 18 18" ><g fill="#fff" stroke="#5a5a5a" stroke-width="1" stroke-linejoin="round"><path d="M1 8.2 H7.9 V1.1 H12.5 L15.9 4.5 V15.6 H4.4 L1 12.5 Z"/><path d="M4.4 15.6 V11.6 H11.5 V4.5 H15.9 M1 8.2 L4.4 11.6 M7.9 8.2 L11.5 11.6 M7.9 1.1 L11.5 4.5" fill="none" stroke-width=".9"/></g></svg>
<span class="t" style="left:46.5px;top:670.00px;font-size:14px;line-height:16px;color:#222;font-weight:normal;font-style:normal;transform:scaleX(0.868)">Part ...</span>
<svg style="left:94px;top:668.5px" width="18" height="18" viewBox="0 0 18 18" ><g stroke="#222" stroke-width="2" fill="#222"><path d="M9 10.6 V4 M9 10.6 L3.4 14 M9 10.6 L14.6 14" fill="none"/><path d="M9 1.2 L11.6 5.2 H6.4 Z M1 15.6 L2.6 11.4 L5.6 15.4 Z M17 15.6 L15.4 11.4 L12.4 15.4 Z" stroke="none"/></g></svg>
<svg style="left:25px;top:695px" width="18" height="18" viewBox="0 0 18 18" ><g fill="#fff" stroke="#5a5a5a" stroke-width="1" stroke-linejoin="round"><path d="M1 8.2 H7.9 V1.1 H12.5 L15.9 4.5 V15.6 H4.4 L1 12.5 Z"/><path d="M4.4 15.6 V11.6 H11.5 V4.5 H15.9 M1 8.2 L4.4 11.6 M7.9 8.2 L11.5 11.6 M7.9 1.1 L11.5 4.5" fill="none" stroke-width=".9"/></g></svg>
<span class="t" style="left:46.5px;top:696.00px;font-size:14px;line-height:16px;color:#222;font-weight:normal;font-style:normal;transform:scaleX(0.868)">Part ...</span>
<svg style="left:94px;top:694.5px" width="18" height="18" viewBox="0 0 18 18" ><g stroke="#222" stroke-width="2" fill="#222"><path d="M9 10.6 V4 M9 10.6 L3.4 14 M9 10.6 L14.6 14" fill="none"/><path d="M9 1.2 L11.6 5.2 H6.4 Z M1 15.6 L2.6 11.4 L5.6 15.4 Z M17 15.6 L15.4 11.4 L12.4 15.4 Z" stroke="none"/></g></svg>
<svg style="left:25px;top:721px" width="18" height="18" viewBox="0 0 18 18" ><g fill="#fff" stroke="#5a5a5a" stroke-width="1" stroke-linejoin="round"><path d="M1 8.2 H7.9 V1.1 H12.5 L15.9 4.5 V15.6 H4.4 L1 12.5 Z"/><path d="M4.4 15.6 V11.6 H11.5 V4.5 H15.9 M1 8.2 L4.4 11.6 M7.9 8.2 L11.5 11.6 M7.9 1.1 L11.5 4.5" fill="none" stroke-width=".9"/></g></svg>
<span class="t" style="left:46.5px;top:722.00px;font-size:14px;line-height:16px;color:#222;font-weight:normal;font-style:normal;transform:scaleX(0.868)">Part ...</span>
<svg style="left:94px;top:720.5px" width="18" height="18" viewBox="0 0 18 18" ><g stroke="#222" stroke-width="2" fill="#222"><path d="M9 10.6 V4 M9 10.6 L3.4 14 M9 10.6 L14.6 14" fill="none"/><path d="M9 1.2 L11.6 5.2 H6.4 Z M1 15.6 L2.6 11.4 L5.6 15.4 Z M17 15.6 L15.4 11.4 L12.4 15.4 Z" stroke="none"/></g></svg>
<svg style="left:2px;top:751px" width="16" height="10" viewBox="0 0 16 10" ><path d="M2.2 1.8 L8 7.4 L13.8 1.8" fill="none" stroke="#444" stroke-width="2"/></svg>
<span class="t" style="left:23.0px;top:748.00px;font-size:14px;line-height:16px;color:#222;font-weight:normal;font-style:normal;transform:scaleX(0.924)">Mate Features (13)</span>
<div class="abs" style="left:9px;top:769px;width:1px;height:57px;background:#ccc"></div>
<svg style="left:24px;top:774px" width="10" height="16" viewBox="0 0 10 16" ><path d="M1.8 2.2 L7.4 8 L1.8 13.8" fill="none" stroke="#444" stroke-width="2"/></svg>
<svg style="left:44px;top:774px" width="16" height="16" viewBox="0 0 16 16" ><g fill="none" stroke="#b4b4b4" stroke-width="1"><rect x="1.5" y="1.5" width="13" height="13"/><path d="M8 1.5 V14.5 M1.5 8 H14.5" stroke-width="1.2"/><path d="M8 3 L6.6 5 H9.4 Z M8 13 L6.6 11 H9.4 Z M3 8 L5 6.6 V9.4 Z M13 8 L11 6.6 V9.4 Z" fill="#b4b4b4" stroke="none"/></g></svg>
<span class="t" style="left:65.0px;top:774.00px;font-size:14px;line-height:16px;color:#999;font-weight:normal;font-style:normal;transform:scaleX(0.920)">Planar 1</span>
<svg style="left:24px;top:800px" width="10" height="16" viewBox="0 0 10 16" ><path d="M1.8 2.2 L7.4 8 L1.8 13.8" fill="none" stroke="#444" stroke-width="2"/></svg>
<svg style="left:44px;top:800px" width="16" height="16" viewBox="0 0 16 16" ><g fill="#fff" stroke="#c4c4c4" stroke-width="1"><path d="M2.4 4.4 V11.6 A5.6 2.6 0 0 0 13.6 11.6 V4.4"/><path d="M2.4 8.8 A5.6 2.6 0 0 0 13.6 8.8 V11.6 A5.6 2.6 0 0 1 2.4 11.6 Z" fill="#d9d9d9"/><ellipse cx="8" cy="4.4" rx="5.6" ry="2.6"/></g></svg>
<span class="t" style="left:65.0px;top:800.00px;font-size:14px;line-height:16px;color:#999;font-weight:normal;font-style:normal;transform:scaleX(0.928)">Fastened 4</span>
<div class="abs" style="left:52px;top:824px;width:1px;height:2px;background:#ccc"></div>
</div>

<div id="canvas" class="abs" style="left:246px;top:38px;width:884px;height:863px;overflow:hidden">
<div class="abs" style="left:-246px;top:-38px;width:1130px;height:941px"><svg id="model" style="left:0;top:0" width="1130" height="941" viewBox="0 0 1130 941">
<defs>
<linearGradient id="gInA" x1="0" y1="0" x2="1" y2="0"><stop offset="0" stop-color="#60829a"/><stop offset=".35" stop-color="#6c8fa7"/><stop offset="1" stop-color="#6d90a8"/></linearGradient>
<linearGradient id="gMot" x1="0" y1="0" x2="0.18" y2="1"><stop offset="0" stop-color="#555"/><stop offset=".06" stop-color="#a8a8a8"/><stop offset=".22" stop-color="#f2f2f2"/><stop offset=".5" stop-color="#e4e4e4"/><stop offset=".75" stop-color="#b4b4b4"/><stop offset=".93" stop-color="#777"/><stop offset="1" stop-color="#333"/></linearGradient>
<linearGradient id="gMotD" x1="0" y1="0" x2="0.18" y2="1"><stop offset="0" stop-color="#484848"/><stop offset=".1" stop-color="#8c8c8c"/><stop offset=".28" stop-color="#d8d8d8"/><stop offset=".5" stop-color="#b6b6b6"/><stop offset=".8" stop-color="#8a8a8a"/><stop offset=".95" stop-color="#555"/><stop offset="1" stop-color="#333"/></linearGradient>
<linearGradient id="gGear" x1="0" y1="0" x2="0" y2="1"><stop offset="0" stop-color="#949494"/><stop offset="1" stop-color="#8a8a8a"/></linearGradient>
</defs>
<polygon points="292.5,426.9 434.8,400.0 434.8,446.2 320.4,467.9" fill="url(#gInA)" stroke="#0c1014" stroke-width="1.0" stroke-linejoin="round"/>
<polygon points="267.5,418.7 312.4,482.9 312.4,558.6 267.5,494.9" fill="#4e6579" stroke="#0c1014" stroke-width="1.0" stroke-linejoin="round"/>
<polygon points="312.4,482.9 471.8,454.4 471.8,462.1 460.1,464.8 452.5,472.2 452.5,516.4 456.2,520.5 461.5,522.3 414.8,537.3 357.4,548.6 357.4,555.6 329.2,561.1 325.7,556.1 312.4,558.6" fill="#6c8fa7" stroke="#0c1014" stroke-width="1.0" stroke-linejoin="round"/>
<polygon points="454.5,509.5 463.5,508.1 471.8,520.5 461.5,522.3 454.5,515.7" fill="#8db8d5" stroke="#0c1014" stroke-width="1.0" stroke-linejoin="round"/>
<polygon points="452.5,472.2 454.5,471.2 454.5,515.7 452.5,516.4" fill="#80a8c4" stroke="#0c1014" stroke-width="0.5" stroke-linejoin="round"/>
<polygon points="454.5,501.9 458.7,507.4 454.5,509.5" fill="#6c8fa7" stroke="#0c1014" stroke-width="0.5" stroke-linejoin="round"/>
<polygon points="452.5,516.4 454.5,515.7 461.5,522.3 456.2,520.5" fill="#80a8c4" stroke="#0c1014" stroke-width="0.5" stroke-linejoin="round"/>
<polygon points="267.5,418.7 426.8,387.5 434.8,400.0 292.5,426.9 320.4,467.9 463.5,441.2 471.8,454.4 312.4,482.9" fill="#8db8d5" stroke="#0c1014" stroke-width="1.0" stroke-linejoin="round"/>
<polygon points="471.8,454.4 471.8,462.1 460.1,464.8 462.3,456.4" fill="#6c8fa7" stroke="#0c1014" stroke-width="0.6" stroke-linejoin="round"/>
<polygon points="357.0,549.3 401.6,611.6 401.6,687.1 358.1,625.4" fill="#4e6579" stroke="#0c1014" stroke-width="1.0" stroke-linejoin="round"/>
<polygon points="401.6,611.6 410.2,613.7 539.8,595.0 539.8,596.7 437.4,614.8 437.4,671.1 562.8,648.8 562.8,660.5 546.2,663.7 544.1,666.9 410.2,690.3 401.6,687.1" fill="#6c8fa7" stroke="#0c1014" stroke-width="1.0" stroke-linejoin="round"/>
<polygon points="401.6,611.6 410.2,613.7 410.2,690.3 401.6,687.1" fill="#688aa2" stroke="#0c1014" stroke-width="0.6" stroke-linejoin="round"/>
<polygon points="437.4,614.8 539.8,596.7 539.8,610.5 437.4,629.3" fill="#6f92ab" stroke="#0c1014" stroke-width="0.6" stroke-linejoin="round"/>
<polygon points="437.4,629.3 539.8,610.5 539.8,617.6 437.4,636.1" fill="#8db8d5" stroke="#0c1014" stroke-width="0.6" stroke-linejoin="round"/>
<polygon points="437.4,636.1 539.8,617.6 549.4,624.4 562.8,648.8 437.4,671.1" fill="#a6cce6" stroke="#0c1014" stroke-width="0.6" stroke-linejoin="round"/>
<polygon points="539.8,596.7 542.4,599.9 543.7,613.7 549.4,619.0 549.4,624.4 539.8,617.6" fill="#6c8fa7" stroke="#0c1014" stroke-width="0.6" stroke-linejoin="round"/>
<polygon points="401.6,611.6 409.3,610.1 547.3,587.2 562.2,585.0 562.2,591.8 410.2,613.7" fill="#7da4c0" stroke="#0c1014" stroke-width="1.0" stroke-linejoin="round"/>
<polygon points="407.6,605.2 544.1,580.4 547.3,587.2 409.3,610.1 401.6,611.6" fill="#a6cce6" stroke="#0c1014" stroke-width="0.8" stroke-linejoin="round"/>
<polygon points="357.0,549.3 373.0,544.2 377.2,547.8 367.6,551.0 407.6,605.2 401.6,611.6" fill="#7ba0bc" stroke="#0c1014" stroke-width="1.0" stroke-linejoin="round"/>
<polygon points="374.0,541.5 500.5,515.9 505.8,523.4 522.8,520.2 556.8,572.3 540.9,574.4 544.1,580.4 407.6,605.2 367.6,551.0 377.2,547.8" fill="#8db8d5" stroke="#0c1014" stroke-width="1.0" stroke-linejoin="round"/>
<polygon points="540.9,573.3 554.7,571.2 556.8,575.5 545.1,578.2" fill="#6c8fa7" stroke="#0c1014" stroke-width="0.6" stroke-linejoin="round"/>
<polygon points="545.1,578.2 556.8,575.5 562.2,585.0 547.3,587.2" fill="#8db8d5" stroke="#0c1014" stroke-width="0.6" stroke-linejoin="round"/>
<polygon points="505.8,523.4 504.8,520.2 517.5,518.7 522.8,520.2" fill="#84abc8" stroke="#0c1014" stroke-width="0.6" stroke-linejoin="round"/>
<ellipse cx="371.9" cy="606.7" rx="1.6" ry="3.2" fill="#5b7891" stroke="#0c1014" stroke-width="0.7"/>
<ellipse cx="517.1" cy="616.9" rx="1.9" ry="1.3" fill="#7a9db9" stroke="#0c1014" stroke-width="0.8"/>
<ellipse cx="458.4" cy="640.3" rx="1.9" ry="1.3" fill="#7a9db9" stroke="#0c1014" stroke-width="0.8"/>
<ellipse cx="469.7" cy="656.7" rx="1.9" ry="1.3" fill="#7a9db9" stroke="#0c1014" stroke-width="0.8"/>
<ellipse cx="438.2" cy="632.2" rx="0.8" ry="1.6" fill="#333"/>
<ellipse cx="438.2" cy="662.6" rx="0.8" ry="1.6" fill="#333"/>
<polygon points="486.2,393.0 492.6,387.5 528.7,435.9 535.1,434.2 535.1,440.2 521.3,441.9" fill="#6c8fa7" stroke="#0c1014" stroke-width="1.0" stroke-linejoin="round"/>
<polygon points="536.2,434.2 541.5,441.9 668.9,418.5 668.9,423.6 542.5,447.2 536.2,440.2" fill="#7a9fbb" stroke="#0c1014" stroke-width="1.0" stroke-linejoin="round"/>
<polygon points="664.7,410.5 678.5,407.3 678.5,412.1 667.8,414.7" fill="#7a9fbb" stroke="#0c1014" stroke-width="0.6" stroke-linejoin="round"/>
<polygon points="496.9,376.9 623.2,353.1 629.6,361.2 646.6,358.4 679.1,403.7 678.5,407.3 664.7,410.5 668.9,418.5 541.5,441.9 536.2,434.2 528.7,435.9 492.6,387.5 502.2,385.4 496.9,383.9" fill="#8db8d5" stroke="#0c1014" stroke-width="1.0" stroke-linejoin="round"/>
<polygon points="536.2,405.6 591.4,394.9 603.5,411.5 546.8,422.8" fill="#6c8fa7" stroke="#0c1014" stroke-width="0.7" stroke-linejoin="round"/>
<polygon points="539.8,408.3 590.3,398.1 603.1,411.5 546.8,422.3" fill="#fff" stroke="#0c1014" stroke-width="0.7" stroke-linejoin="round"/>
<polyline points="583.3,399.4 583.3,415.8" fill="none" stroke="#0c1014" stroke-width="0.8"/>
<polygon points="520.6,412.6 528.7,407.3 546.8,423.2 546.8,427.4 533.0,430.0 520.6,415.8" fill="#6c8fa7" stroke="#0c1014" stroke-width="1.0" stroke-linejoin="round"/>
<polygon points="528.7,407.3 538.3,405.6 546.8,422.8 535.1,425.3" fill="#8db8d5" stroke="#0c1014" stroke-width="0.6" stroke-linejoin="round"/>
<polygon points="533.0,430.0 535.1,425.3 546.8,422.8 546.8,427.4" fill="#7a9fbb" stroke="#0c1014" stroke-width="0.6" stroke-linejoin="round"/>
<ellipse cx="531.3" cy="410.9" rx="1.7" ry="1.1" fill="#5b7891" stroke="#0c1014" stroke-width="0.7"/>
<ellipse cx="536.8" cy="419.4" rx="1.7" ry="1.1" fill="#5b7891" stroke="#0c1014" stroke-width="0.7"/>
<polygon points="474.6,348.4 480.9,341.4 490.5,339.9 502.2,356.3 502.2,361.6 488.4,364.4 474.6,350.1" fill="#6c8fa7" stroke="#0c1014" stroke-width="1.0" stroke-linejoin="round"/>
<polygon points="480.9,341.4 490.5,339.9 502.2,356.3 491.6,358.4" fill="#8db8d5" stroke="#0c1014" stroke-width="0.6" stroke-linejoin="round"/>
<polygon points="488.4,364.4 491.6,358.4 502.2,356.3 502.2,361.6" fill="#7a9fbb" stroke="#0c1014" stroke-width="0.6" stroke-linejoin="round"/>
<ellipse cx="485.6" cy="345.7" rx="1.6" ry="1.0" fill="#5b7891" stroke="#0c1014" stroke-width="0.7"/>
<ellipse cx="491.6" cy="353.5" rx="1.6" ry="1.0" fill="#5b7891" stroke="#0c1014" stroke-width="0.7"/>
<polygon points="617.5,316.6 629.6,332.9 629.6,338.2 617.5,321.9" fill="#4f4f4f" stroke="#0c1014" stroke-width="1.0" stroke-linejoin="round"/>
<polygon points="629.6,332.9 661.5,326.6 661.5,331.9 629.6,338.2" fill="#6c6c6c" stroke="#0c1014" stroke-width="1.0" stroke-linejoin="round"/>
<polygon points="617.5,316.6 650.2,309.6 661.5,326.6 629.6,332.9" fill="#8d8d8d" stroke="#0c1014" stroke-width="1.0" stroke-linejoin="round"/>
<ellipse cx="629.6" cy="318.7" rx="1.9" ry="1.2" fill="#555" stroke="#222" stroke-width="0.7"/>
<ellipse cx="643.9" cy="315.7" rx="1.9" ry="1.2" fill="#555" stroke="#222" stroke-width="0.7"/>
<ellipse cx="635.2" cy="326.5" rx="1.9" ry="1.2" fill="#555" stroke="#222" stroke-width="0.7"/>
<ellipse cx="649.3" cy="323.6" rx="1.9" ry="1.2" fill="#555" stroke="#222" stroke-width="0.7"/>
<polygon points="816.6,327.4 943.1,304.0 971.8,344.4 845.7,374.6 840.0,369.5 816.6,349.1" fill="#6d90a9" stroke="#0c1014" stroke-width="1.0" stroke-linejoin="round"/>
<polygon points="943.1,304.0 971.8,344.4 943.1,351.4" fill="#4e6579" stroke="#0c1014" stroke-width="1.0" stroke-linejoin="round"/>
<path d="M909.0 318.9 L929.2 314.2 Q938.8 315.7 935.6 325.7 L912.2 332.1 Q902.7 330.6 909.0 318.9 Z" fill="#8bb3d0" stroke="#0c1014" stroke-width=".8"/>
<polygon points="808.1,337.6 816.6,349.1 845.7,374.6 853.8,389.0 863.3,389.5 862.3,393.3 813.4,398.4" fill="#688aa2"/>
<polygon points="808.1,315.7 816.6,327.4 816.6,349.1 808.1,337.6" fill="#6c8fa7" stroke="#0c1014" stroke-width="1.0" stroke-linejoin="round"/>
<polygon points="813.4,397.6 863.3,390.1 871.8,394.4 871.8,439.0 853.8,455.4 812.3,406.1" fill="#9ac2de"/>
<polygon points="814.4,397.6 862.3,392.2 862.3,428.4 845.7,438.4 814.4,402.9" fill="#9ac2de" stroke="#0c1014" stroke-width="0.6" stroke-linejoin="round"/>
<polygon points="814.4,397.6 814.4,402.9 845.7,438.4 853.8,454.9 847.4,453.2 812.3,406.1" fill="#4e6579" stroke="#0c1014" stroke-width="0.6" stroke-linejoin="round"/>
<polygon points="845.7,438.4 860.2,432.6 869.7,440.1 863.3,446.4 853.8,447.5 853.8,454.9" fill="#8db8d5" stroke="#0c1014" stroke-width="0.6" stroke-linejoin="round"/>
<polygon points="862.3,392.2 863.3,389.0 871.8,393.3 871.8,437.9 869.7,440.1 862.3,428.4" fill="#59788f" stroke="#0c1014" stroke-width="0.6" stroke-linejoin="round"/>
<polygon points="852.7,384.8 1012.8,350.8 1012.8,423.1 915.4,440.1 919.7,445.4 898.4,448.6 898.4,453.9 869.7,459.2 866.5,453.9 853.8,454.9 853.8,447.5 863.3,446.4 871.8,437.9 871.8,393.3 863.3,389.0 853.8,389.0" fill="#6c8fa7" stroke="#0c1014" stroke-width="1.0" stroke-linejoin="round"/>
<polygon points="808.1,315.7 966.9,285.9 1012.8,350.8 852.7,384.8 845.7,374.6 971.8,344.4 943.1,304.0 816.6,327.4" fill="#8db8d5" stroke="#0c1014" stroke-width="1.0" stroke-linejoin="round"/>
<polygon points="845.7,374.6 852.7,384.8 853.8,389.0 845.7,380.5" fill="#7a9fbb" stroke="#0c1014" stroke-width="0.6" stroke-linejoin="round"/>
<polygon points="798.2,329.5 801.9,330.7 839.0,381.3 836.5,383.0" fill="#6c8fa7" stroke="#0c1014" stroke-width="0.6" stroke-linejoin="round"/>
<polygon points="679.3,407.0 695.2,404.9 701.6,412.7 829.0,388.9 829.0,394.3 701.6,418.0 695.2,410.2 679.3,411.9" fill="#7a9fbb" stroke="#0c1014" stroke-width="1.0" stroke-linejoin="round"/>
<polygon points="824.8,380.5 836.5,382.6 836.5,387.2 829.0,388.9" fill="#7a9fbb" stroke="#0c1014" stroke-width="0.6" stroke-linejoin="round"/>
<polygon points="655.9,346.9 782.3,323.1 788.7,331.2 798.2,329.5 836.5,382.6 824.8,380.5 829.0,388.5 701.6,412.7 695.2,404.9 679.3,407.0 646.4,358.1 661.2,356.0 655.9,353.9" fill="#8db8d5" stroke="#0c1014" stroke-width="1.0" stroke-linejoin="round"/>
<polygon points="663.6,383.9 674.2,398.8 674.2,404.1 663.6,389.2" fill="#4f4f4f" stroke="#0c1014" stroke-width="1.0" stroke-linejoin="round"/>
<polygon points="674.2,398.8 707.1,390.3 707.1,395.6 674.2,404.1" fill="#6c6c6c" stroke="#0c1014" stroke-width="1.0" stroke-linejoin="round"/>
<polygon points="663.6,383.9 694.4,375.4 707.1,390.3 674.2,398.8" fill="#8d8d8d" stroke="#0c1014" stroke-width="1.0" stroke-linejoin="round"/>
<ellipse cx="675.0" cy="385.2" rx="1.9" ry="1.2" fill="#555" stroke="#222" stroke-width="0.7"/>
<ellipse cx="688.8" cy="381.5" rx="1.9" ry="1.2" fill="#555" stroke="#222" stroke-width="0.7"/>
<ellipse cx="680.3" cy="392.2" rx="1.9" ry="1.2" fill="#555" stroke="#222" stroke-width="0.7"/>
<ellipse cx="694.5" cy="388.5" rx="1.9" ry="1.2" fill="#555" stroke="#222" stroke-width="0.7"/>
<polygon points="776.6,287.0 786.6,284.4 791.9,285.9 804.0,304.0 789.7,307.8 776.6,289.5" fill="#6c8fa7" stroke="#0c1014" stroke-width="1.0" stroke-linejoin="round"/>
<polygon points="780.2,286.1 786.6,284.4 791.9,285.9 804.0,304.0 793.4,301.9" fill="#8db8d5" stroke="#0c1014" stroke-width="0.6" stroke-linejoin="round"/>
<polygon points="789.7,307.8 793.4,301.9 804.0,304.0" fill="#7a9fbb" stroke="#0c1014" stroke-width="0.6" stroke-linejoin="round"/>
<ellipse cx="787.4" cy="288.7" rx="1.5" ry="1.0" fill="#5b7891" stroke="#0c1014" stroke-width="0.7"/>
<ellipse cx="792.1" cy="296.3" rx="1.5" ry="1.0" fill="#5b7891" stroke="#0c1014" stroke-width="0.7"/>
<polygon points="822.2,351.8 832.2,349.7 837.5,353.9 849.2,368.8 834.4,373.0 822.2,355.0" fill="#6c8fa7" stroke="#0c1014" stroke-width="1.0" stroke-linejoin="round"/>
<polygon points="825.9,351.1 832.2,349.7 837.5,353.9 849.2,368.8 838.6,366.6" fill="#8db8d5" stroke="#0c1014" stroke-width="0.6" stroke-linejoin="round"/>
<polygon points="834.4,373.0 838.6,366.6 849.2,368.8" fill="#7a9fbb" stroke="#0c1014" stroke-width="0.6" stroke-linejoin="round"/>
<ellipse cx="832.9" cy="354.5" rx="1.5" ry="1.0" fill="#5b7891" stroke="#0c1014" stroke-width="0.7"/>
<ellipse cx="838.0" cy="361.8" rx="1.5" ry="1.0" fill="#5b7891" stroke="#0c1014" stroke-width="0.7"/>
<polygon points="899.1,447.8 905.5,450.6 938.0,498.4 944.2,509.0 944.2,518.8 923.6,490.3 923.6,540.3 943.8,576.4 943.8,588.1 905.5,536.0 900.2,516.5 909.8,512.6 909.8,461.6 901.3,459.5" fill="#4e6579" stroke="#0c1014" stroke-width="1.0" stroke-linejoin="round"/>
<polygon points="923.6,491.4 943.8,514.8 1069.8,493.5 1069.8,553.0 943.8,576.4 923.6,540.3" fill="#6d90a9" stroke="#0c1014" stroke-width="0.6" stroke-linejoin="round"/>
<polygon points="923.6,539.2 1046.8,516.0 1050.5,522.2 926.5,546.2" fill="#acd1ea" stroke="#0c1014" stroke-width="0.6" stroke-linejoin="round"/>
<polygon points="926.5,546.2 1050.5,522.2 1069.8,553.0 944.8,576.4" fill="#97bfdc" stroke="#0c1014" stroke-width="0.6" stroke-linejoin="round"/>
<polygon points="1046.8,500.1 1058.3,498.4 1069.8,496.7 1069.8,553.0 1050.5,522.2 1046.8,516.0" fill="#6c8fa7" stroke="#0c1014" stroke-width="0.6" stroke-linejoin="round"/>
<polygon points="1046.8,500.1 1058.3,498.4 1059.6,504.1 1046.8,506.3" fill="#acd1ea" stroke="#0c1014" stroke-width="0.5" stroke-linejoin="round"/>
<polygon points="1058.3,498.4 1066.4,507.3 1066.4,518.0 1053.2,523.3 1059.6,504.1" fill="#58768d" stroke="#0c1014" stroke-width="0.5" stroke-linejoin="round"/>
<polygon points="944.2,509.0 959.3,505.4 960.1,508.2 1101.0,481.0 1101.0,559.8 944.8,588.1 944.8,576.4 1069.8,553.0 1069.8,496.3 944.2,518.8" fill="#6c8fa7" stroke="#0c1014" stroke-width="1.0" stroke-linejoin="round"/>
<polygon points="900.2,516.5 909.8,512.6 909.8,527.5 905.5,536.0" fill="#8db8d5" stroke="#0c1014" stroke-width="0.6" stroke-linejoin="round"/>
<polygon points="954.8,496.7 1098.3,474.6 1101.0,481.0 960.1,508.2" fill="#b0d4ec" stroke="#0c1014" stroke-width="1.0" stroke-linejoin="round"/>
<polygon points="938.0,498.4 953.1,495.6 959.3,505.4 944.2,509.0" fill="#789cb7" stroke="#0c1014" stroke-width="0.6" stroke-linejoin="round"/>
<polygon points="915.1,438.3 1042.6,414.5 1047.9,421.3 1058.1,417.4 1098.3,474.6 954.8,496.7 953.1,495.6 938.0,498.4 905.5,450.6 920.4,446.3" fill="#8db8d5" stroke="#0c1014" stroke-width="1.0" stroke-linejoin="round"/>
<polygon points="1058.1,417.4 1060.7,418.7 1101.0,481.0 1098.3,474.6" fill="#7a9fbb" stroke="#0c1014" stroke-width="0.5" stroke-linejoin="round"/>
<polygon points="899.1,447.8 915.1,443.6 920.4,446.3 905.5,450.6" fill="#6c8fa7" stroke="#0c1014" stroke-width="0.6" stroke-linejoin="round"/>
<polygon points="1047.9,421.3 1046.8,418.7 1056.4,416.6 1058.1,417.4" fill="#84abc8" stroke="#0c1014" stroke-width="0.5" stroke-linejoin="round"/>
<ellipse cx="1026.7" cy="521.1" rx="1.5" ry="2.0" fill="#54718b" stroke="#0c1014" stroke-width="0.8"/>
<ellipse cx="946.5" cy="536.0" rx="1.5" ry="2.0" fill="#54718b" stroke="#0c1014" stroke-width="0.8"/>
<ellipse cx="1015.0" cy="535.0" rx="1.9" ry="1.2" fill="#54718b" stroke="#0c1014" stroke-width="0.8"/>
<ellipse cx="1046.4" cy="529.0" rx="1.9" ry="1.2" fill="#54718b" stroke="#0c1014" stroke-width="0.8"/>
<ellipse cx="1026.2" cy="551.5" rx="1.9" ry="1.2" fill="#54718b" stroke="#0c1014" stroke-width="0.8"/>
<ellipse cx="1058.1" cy="545.6" rx="1.9" ry="1.2" fill="#54718b" stroke="#0c1014" stroke-width="0.8"/>
<ellipse cx="912.9" cy="505.2" rx="1.4" ry="3" fill="#7a9db9" stroke="#0c1014" stroke-width="0.7"/>
<polygon points="582.9,536.1 588.7,528.5 600.2,531.3 592.5,546.6 583.9,543.2" fill="#707070" stroke="#0c1014" stroke-width="1.0" stroke-linejoin="round"/>
<polygon points="582.9,493.1 604.9,479.3 642.2,472.4 671.9,475.5 678.5,485.4 677.6,494.1 672.8,497.3 672.8,519.9 598.2,533.3 588.7,530.4 588.7,510.3 582.9,501.1" fill="#828282" stroke="#0c1014" stroke-width="1.0" stroke-linejoin="round"/>
<polygon points="583.9,494.1 604.9,479.3 642.2,472.4 671.9,475.5 678.2,485.4 674.7,483.5 666.1,483.5 590.6,499.2" fill="#b2b2b2" stroke="#0c1014" stroke-width="0.8" stroke-linejoin="round"/>
<polygon points="598.2,499.8 664.2,486.4 671.9,496.0 671.9,518.3 598.2,531.0" fill="url(#gGear)" stroke="#0c1014" stroke-width="0.7" stroke-linejoin="round"/>
<ellipse cx="592.5" cy="502.3" rx="1.9" ry="1.9" fill="#9a9a9a" stroke="#2a2a2a" stroke-width="0.8"/>
<ellipse cx="672.8" cy="486.8" rx="1.9" ry="1.9" fill="#9a9a9a" stroke="#2a2a2a" stroke-width="0.8"/>
<ellipse cx="595.0" cy="508.4" rx="1.8" ry="2.2" fill="#1c1c1c"/>
<ellipse cx="670.5" cy="495.0" rx="1.8" ry="2.2" fill="#1c1c1c"/>
<path d="M650.0 522.6 L682.5 517.4 A8.6 26.2 -5.0 0 1 687.1 569.5 L656.2 575.7 A8.8 26.7 -6.7 0 1 650.0 522.6 Z" fill="url(#gMotD)" stroke="#0c1014" stroke-width=".8"/>
<path d="M610.0 527.5 L649.8 521.1 A9.3 28.2 -6.7 0 1 656.4 577.2 L618.6 584.6 A9.5 28.9 -8.6 0 1 610.0 527.5 Z" fill="url(#gMot)" stroke="#0c1014" stroke-width=".8"/>
<ellipse cx="614.3" cy="556.1" rx="9.5" ry="28.9" fill="#8e8e8e" stroke="#0c1014" stroke-width="0.8" transform="rotate(-8.6 614.3 556.1)"/>
<path d="M601.3 530.9 L610.3 529.5 A8.9 26.9 -8.6 0 1 618.3 582.7 L609.9 584.4 A8.9 27.1 -9.1 0 1 601.3 530.9 Z" fill="url(#gMotD)" stroke="#0c1014" stroke-width=".8"/>
<ellipse cx="605.6" cy="557.6" rx="8.9" ry="27.1" fill="#4a4a4a" stroke="#0c1014" stroke-width="0.8" transform="rotate(-9.1 605.6 557.6)"/>
<ellipse cx="662.9" cy="542.8" rx="3.6" ry="7.2" fill="#8a8a8a" stroke="#333" stroke-width="0.8" transform="rotate(-8 662.9 542.8)"/>
<ellipse cx="598.2" cy="557.7" rx="8.6" ry="21.5" fill="#4a4d50" stroke="#0c1014" stroke-width="0.8" transform="rotate(-8 598.2 557.7)"/>
<ellipse cx="597.7" cy="557.7" rx="6.0" ry="16" fill="#8b949c" stroke="#6f94b6" stroke-width="1.1" transform="rotate(-8 597.7 557.7)"/>
<ellipse cx="597.7" cy="557.7" rx="3.4" ry="9.5" fill="#b9c1c8" stroke="#6f94b6" stroke-width="0.9" transform="rotate(-8 597.7 557.7)"/>
<ellipse cx="597.7" cy="557.7" rx="1.6" ry="4" fill="#5a5f64" transform="rotate(-8 597.7 557.7)"/>
<ellipse cx="686.2" cy="541.5" rx="6.4" ry="17.2" fill="#c4ccd3" stroke="#5f86a8" stroke-width="1.3" transform="rotate(-9 686.2 541.5)"/>
<ellipse cx="686.2" cy="541.5" rx="4.6" ry="12.6" fill="#d9dfe4" stroke="#5f86a8" stroke-width="0.8" transform="rotate(-9 686.2 541.5)"/>
<ellipse cx="686.2" cy="541.5" rx="2.6" ry="7.4" fill="#f4f6f8" stroke="#5f86a8" stroke-width="0.8" transform="rotate(-9 686.2 541.5)"/>
<polygon points="682.4,520.2 689.1,521.0 690.4,523.7 684.3,523.3" fill="#3a3a3a" stroke="#0c1014" stroke-width="0.5" stroke-linejoin="round"/>
<polygon points="686.2,521.4 688.9,521.8 689.3,523.1 686.6,522.9" fill="#e4a81c"/>
<polyline points="573.4,562.9 594.8,559.6" fill="none" stroke="#1428d8" stroke-width="2.9"/>
<polyline points="689.1,541.1 707.6,538.0" fill="none" stroke="#1428d8" stroke-width="2.9"/>
<polyline points="595.0,531.7 595.2,540.9" fill="none" stroke="#1c8c1c" stroke-width="1.4"/>
<polyline points="597.9,531.3 598.0,540.5" fill="none" stroke="#1c8c1c" stroke-width="1.4"/>
<polyline points="685.8,560.0 686.0,570.5" fill="none" stroke="#18a018" stroke-width="1.8"/>
<polyline points="602.4,570.0 605.9,574.6" fill="none" stroke="#e02020" stroke-width="1.3"/>
<polyline points="605.1,569.2 608.9,573.8" fill="none" stroke="#e02020" stroke-width="1.3"/>
<polyline points="693.1,552.4 696.9,557.7" fill="none" stroke="#e02020" stroke-width="1.5"/>
<polygon points="664.6,579.5 676.6,596.0 676.6,600.7 664.6,584.3" fill="#4f4f4f" stroke="#0c1014" stroke-width="1.0" stroke-linejoin="round"/>
<polygon points="676.6,596.0 707.6,588.7 707.6,593.5 676.6,600.7" fill="#6c6c6c" stroke="#0c1014" stroke-width="1.0" stroke-linejoin="round"/>
<polygon points="664.6,579.5 696.1,572.4 707.6,588.7 676.6,596.0" fill="#8d8d8d" stroke="#0c1014" stroke-width="1.0" stroke-linejoin="round"/>
<ellipse cx="676.4" cy="581.6" rx="1.9" ry="1.2" fill="#555" stroke="#222" stroke-width="0.7"/>
<ellipse cx="690.2" cy="578.5" rx="1.9" ry="1.2" fill="#555" stroke="#222" stroke-width="0.7"/>
<ellipse cx="682.0" cy="589.3" rx="1.9" ry="1.2" fill="#555" stroke="#222" stroke-width="0.7"/>
<ellipse cx="695.7" cy="586.2" rx="1.9" ry="1.2" fill="#555" stroke="#222" stroke-width="0.7"/>
<polyline points="687.0,576.3 685.4,583.9" fill="none" stroke="#0c1014" stroke-width="0.8"/>
<polygon points="708.8,447.6 713.9,454.9 714.5,460.6 708.8,451.4" fill="#6c8fa7" stroke="#0c1014" stroke-width="0.6" stroke-linejoin="round"/>
<polygon points="713.9,454.9 745.1,448.2 745.1,453.9 714.5,460.6" fill="#f3f6f9" stroke="#0c1014" stroke-width="0.7" stroke-linejoin="round"/>
<polygon points="708.8,447.6 739.7,441.1 745.1,448.2 713.9,454.9" fill="#a6cce6" stroke="#0c1014" stroke-width="0.7" stroke-linejoin="round"/>
<ellipse cx="719.1" cy="449.1" rx="1.7" ry="1.0" fill="#7a9db9" stroke="#0c1014" stroke-width="0.7"/>
<ellipse cx="735.0" cy="446.1" rx="1.7" ry="1.0" fill="#7a9db9" stroke="#0c1014" stroke-width="0.7"/>
<polygon points="710.1,510.3 716.8,502.7 716.8,493.1 710.7,485.4" fill="#707070" stroke="#0c1014" stroke-width="1.0" stroke-linejoin="round"/>
<polygon points="710.1,471.1 726.3,459.6 768.4,448.2 798.0,451.4 806.6,461.5 805.7,469.2 800.9,473.6 800.9,510.3 753.1,520.8 718.7,527.9 710.7,520.2 710.1,510.3 716.8,502.7 716.8,493.1 710.7,485.4" fill="#828282" stroke="#0c1014" stroke-width="1.0" stroke-linejoin="round"/>
<polygon points="711.0,471.7 726.3,459.6 768.4,448.2 798.0,451.4 806.3,461.5 802.8,460.2 794.2,458.7 718.7,475.1" fill="#b2b2b2" stroke="#0c1014" stroke-width="0.8" stroke-linejoin="round"/>
<polygon points="728.2,475.5 794.2,461.5 800.9,471.1 800.5,509.3 728.2,521.4" fill="url(#gGear)" stroke="#0c1014" stroke-width="0.7" stroke-linejoin="round"/>
<ellipse cx="720.6" cy="477.8" rx="1.9" ry="1.9" fill="#9a9a9a" stroke="#2a2a2a" stroke-width="0.8"/>
<ellipse cx="800.5" cy="462.9" rx="1.9" ry="1.9" fill="#9a9a9a" stroke="#2a2a2a" stroke-width="0.8"/>
<ellipse cx="720.6" cy="522.2" rx="1.9" ry="1.9" fill="#9a9a9a" stroke="#2a2a2a" stroke-width="0.8"/>
<ellipse cx="722.9" cy="485.4" rx="1.8" ry="2.2" fill="#1c1c1c"/>
<ellipse cx="798.6" cy="471.1" rx="1.8" ry="2.2" fill="#1c1c1c"/>
<ellipse cx="722.9" cy="513.7" rx="1.8" ry="2.2" fill="#1c1c1c"/>
<polygon points="708.4,447.6 713.5,454.9 714.1,460.6 708.4,451.4" fill="#6c8fa7" stroke="#0c1014" stroke-width="0.6" stroke-linejoin="round"/>
<polygon points="713.5,454.9 744.7,448.2 744.7,453.9 714.1,460.6" fill="#f3f6f9" stroke="#0c1014" stroke-width="0.7" stroke-linejoin="round"/>
<polygon points="708.4,447.6 739.3,441.1 744.7,448.2 713.5,454.9" fill="#a6cce6" stroke="#0c1014" stroke-width="0.7" stroke-linejoin="round"/>
<ellipse cx="718.7" cy="449.1" rx="1.7" ry="1.0" fill="#7a9db9" stroke="#0c1014" stroke-width="0.7"/>
<ellipse cx="734.6" cy="446.1" rx="1.7" ry="1.0" fill="#7a9db9" stroke="#0c1014" stroke-width="0.7"/>
<path d="M828.7 486.3 L832.6 485.6 A9.2 28.0 -13.0 0 1 845.1 540.0 L841.2 540.8 A9.2 27.9 -12.9 0 1 828.7 486.3 Z" fill="url(#gMotD)" stroke="#0c1014" stroke-width=".8"/>
<path d="M786.5 493.4 L828.5 485.3 A9.6 28.9 -12.9 0 1 841.4 541.7 L798.1 549.8 A9.5 28.8 -11.7 0 1 786.5 493.4 Z" fill="url(#gMot)" stroke="#0c1014" stroke-width=".8"/>
<ellipse cx="792.3" cy="521.6" rx="9.5" ry="28.8" fill="#8e8e8e" stroke="#0c1014" stroke-width="0.8" transform="rotate(-11.7 792.3 521.6)"/>
<path d="M756.2 500.8 L786.8 494.9 A9.0 27.3 -11.7 0 1 797.8 548.4 L766.3 554.3 A9.0 27.2 -10.7 0 1 756.2 500.8 Z" fill="url(#gMotD)" stroke="#0c1014" stroke-width=".8"/>
<ellipse cx="761.2" cy="527.5" rx="9.0" ry="27.2" fill="#2c2c2c" stroke="#0c1014" stroke-width="0.8" transform="rotate(-10.7 761.2 527.5)"/>
<ellipse cx="789.8" cy="514.1" rx="3.8" ry="7.6" fill="#e6e6e6" stroke="#333" stroke-width="0.8" transform="rotate(-10 789.8 514.1)"/>
<ellipse cx="759.2" cy="527.5" rx="9.4" ry="26.5" fill="#2e2e2e" stroke="#0c1014" stroke-width="0.8" transform="rotate(-9 759.2 527.5)"/>
<ellipse cx="757.7" cy="528.5" rx="6.4" ry="18" fill="#7f8890" stroke="#6f94b6" stroke-width="1.1" transform="rotate(-9 757.7 528.5)"/>
<ellipse cx="757.7" cy="528.5" rx="3.6" ry="10.5" fill="#b9c1c8" stroke="#6f94b6" stroke-width="0.9" transform="rotate(-9 757.7 528.5)"/>
<ellipse cx="757.7" cy="528.5" rx="1.6" ry="4.4" fill="#5a5f64" transform="rotate(-9 757.7 528.5)"/>
<ellipse cx="843.0" cy="512.6" rx="7.0" ry="22" fill="#bfc8cf" stroke="#6a8cab" stroke-width="0.9" transform="rotate(-10 843.0 512.6)"/>
<ellipse cx="843.0" cy="512.6" rx="5.2" ry="17.5" fill="#d3dae0" stroke="#5f86a8" stroke-width="1.1" transform="rotate(-10 843.0 512.6)"/>
<ellipse cx="843.0" cy="512.6" rx="2.8" ry="10" fill="#f4f6f8" stroke="#5f86a8" stroke-width="0.8" transform="rotate(-10 843.0 512.6)"/>
<polygon points="750.8,508.0 756.0,506.9 756.9,509.9 752.1,510.7" fill="#e4a81c" stroke="#333" stroke-width="0.5" stroke-linejoin="round"/>
<polygon points="750.4,548.2 758.8,546.6 759.6,549.7 752.0,550.8" fill="#e4a81c" stroke="#333" stroke-width="0.5" stroke-linejoin="round"/>
<ellipse cx="833.0" cy="490.6" rx="4.2" ry="4.2" fill="#fff" stroke="#111" stroke-width="1.1"/>
<ellipse cx="833.0" cy="490.6" rx="1.4" ry="1.4" fill="#111"/>
<polyline points="733.0,533.3 751.6,529.8" fill="none" stroke="#1428d8" stroke-width="2.9"/>
<polyline points="845.8,511.3 867.4,507.8" fill="none" stroke="#1428d8" stroke-width="2.9"/>
<polyline points="754.1,501.1 754.4,511.3" fill="none" stroke="#18a018" stroke-width="1.8"/>
<polyline points="842.0,531.0 842.4,540.9" fill="none" stroke="#18a018" stroke-width="1.5"/>
<polyline points="845.3,530.2 845.6,539.9" fill="none" stroke="#18a018" stroke-width="1.5"/>
<polyline points="761.1,539.4 765.0,544.7" fill="none" stroke="#e02020" stroke-width="1.6"/>
<polyline points="850.2,523.7 852.9,528.3" fill="none" stroke="#e02020" stroke-width="1.2"/>
<polyline points="852.9,522.7 856.0,527.5" fill="none" stroke="#e02020" stroke-width="1.2"/>
<polygon points="823.3,548.5 837.2,544.7 851.0,560.0 849.7,564.2 836.3,570.5 823.3,552.8" fill="#6c8fa7" stroke="#0c1014" stroke-width="1.0" stroke-linejoin="round"/>
<polygon points="823.3,548.5 837.2,544.7 851.0,560.0 836.3,565.8" fill="#9ac2de" stroke="#0c1014" stroke-width="0.6" stroke-linejoin="round"/>
<polygon points="836.3,565.8 851.0,560.0 849.7,564.2 836.3,570.5" fill="#7a9fbb" stroke="#0c1014" stroke-width="0.6" stroke-linejoin="round"/>
<ellipse cx="835.7" cy="550.5" rx="1.7" ry="1.1" fill="#444" stroke="#0c1014" stroke-width="0.6"/>
<ellipse cx="840.1" cy="558.5" rx="1.7" ry="1.1" fill="#444" stroke="#0c1014" stroke-width="0.6"/>
<polygon points="709.5,644.2 714.4,651.3 713.7,654.6 709.5,648.9" fill="#6c8fa7" stroke="#0c1014" stroke-width="1.0" stroke-linejoin="round"/>
<polygon points="714.4,651.3 747.4,645.0 747.4,647.1 713.7,654.6" fill="#7a9fbb" stroke="#0c1014" stroke-width="0.7" stroke-linejoin="round"/>
<polygon points="709.5,644.2 742.0,637.6 747.4,645.0 714.4,651.3" fill="#9ac2de" stroke="#0c1014" stroke-width="1.0" stroke-linejoin="round"/>
<ellipse cx="720.5" cy="646.4" rx="2.0" ry="1.3" fill="#7a9db9" stroke="#0c1014" stroke-width="0.8"/>
<ellipse cx="736.7" cy="643.5" rx="2.0" ry="1.3" fill="#7a9db9" stroke="#0c1014" stroke-width="0.8"/>
<polyline points="488.4,368.0 488.4,410.5" fill="none" stroke="#0a0a0a" stroke-width="1.25" stroke-dasharray="24 3 3.5 3"/>
<polyline points="639.6,339.3 639.6,358.4" fill="none" stroke="#0a0a0a" stroke-width="1.25" stroke-dasharray="24 3 3.5 3"/>
<polyline points="534.0,441.2 534.0,461.4" fill="none" stroke="#111" stroke-width="1.0"/>
<polyline points="685.3,406.2 685.3,446.6" fill="none" stroke="#0a0a0a" stroke-width="1.25" stroke-dasharray="24 3 3.5 3"/>
<polyline points="790.8,311.4 790.8,329.9" fill="none" stroke="#0a0a0a" stroke-width="1.25" stroke-dasharray="24 3 3.5 3"/>
<polyline points="534.0,442.4 534.0,476.3" fill="none" stroke="#0a0a0a" stroke-width="1.25" stroke-dasharray="24 3 3.5 3"/>
<polyline points="489.1,517.8 489.1,492.2" fill="none" stroke="#0a0a0a" stroke-width="1.25" stroke-dasharray="24 3 3.5 3"/>
<polyline points="391.0,507.5 585.0,469.6" fill="none" stroke="#0a0a0a" stroke-width="1.25" stroke-dasharray="24 3 3.5 3"/>
<polyline points="548.3,551.0 577.0,545.1" fill="none" stroke="#0a0a0a" stroke-width="1.25" stroke-dasharray="24 3 3.5 3"/>
<polyline points="745.4,441.9 824.0,427.7" fill="none" stroke="#0a0a0a" stroke-width="1.25" stroke-dasharray="24 3 3.5 3"/>
<polyline points="838.6,424.2 860.0,420.3" fill="none" stroke="#111" stroke-width="1.0"/>
<polyline points="881.4,416.7 935.0,406.5" fill="none" stroke="#0a0a0a" stroke-width="1.25" stroke-dasharray="24 3 3.5 3"/>
<polyline points="845.3,493.7 909.8,482.5" fill="none" stroke="#0a0a0a" stroke-width="1.25" stroke-dasharray="24 3 3.5 3"/>
<polyline points="640.3,463.5 640.3,466.7" fill="none" stroke="#111" stroke-width="1.0"/>
<polyline points="685.2,430.0 685.2,446.3" fill="none" stroke="#0a0a0a" stroke-width="1.25" stroke-dasharray="24 3 3.5 3"/>
<polyline points="728.3,590.6 728.3,609.9" fill="none" stroke="#0a0a0a" stroke-width="1.25" stroke-dasharray="24 3 3.5 3"/>
<polyline points="791.3,433.8 791.3,451.0" fill="none" stroke="#0a0a0a" stroke-width="1.25" stroke-dasharray="24 3 3.5 3"/>
<polyline points="836.3,384.8 836.3,418.8" fill="none" stroke="#0a0a0a" stroke-width="1.25" stroke-dasharray="24 3 3.5 3"/>
<polyline points="728.2,589.7 728.2,645.0" fill="none" stroke="#0a0a0a" stroke-width="1.25" stroke-dasharray="24 3 3.5 3"/>
</svg></div>
</div>

<div class="abs" style="left:1125px;top:74px;width:1px;height:827px;background:#d0d0d0"></div>
<div class="abs" style="left:1125px;top:74px;width:5px;height:1px;background:#d0d0d0"></div>
<div class="abs" style="left:807px;top:38px;width:222px;height:28px;background:#fcc013"></div>
<span class="t" style="left:816.0px;top:44.00px;font-size:14px;line-height:16px;color:#1a1a1a;font-weight:normal;font-style:normal;transform:scaleX(0.913)">Editing Explode 1</span>
<div class="abs" style="left:975px;top:41px;width:51px;height:22px;background:#fff;border:1px solid #a0a0a0;border-radius:3px"></div>
<span class="t" style="left:986.5px;top:44.00px;font-size:14px;line-height:16px;color:#222;font-weight:normal;font-style:normal;transform:scaleX(0.866)">Done</span>
<div class="abs" style="left:246px;top:463px;width:32px;height:34px;background:#fff;border:1px solid #c4c4c4;border-left:none"></div>
<svg style="left:250px;top:468px" width="24" height="24" viewBox="0 0 24 24" ><path d="M10.1 5.4 H20 M7.1 10.4 H20 M7.1 15.4 H20 M7.1 20.4 H20" stroke="#333" stroke-width="1.2"/><path d="M2 4.2 L5 7.4 L8 4.2" fill="none" stroke="#333" stroke-width="1.3"/><path d="M5 9.3 V21.8" stroke="#999" stroke-width="1.9"/></svg>
<svg style="left:950px;top:80px" width="175" height="170" viewBox="0 0 175 170" ><path d="M85 10 L77.7 18 H92.2 Z M77.7 149 H92.2 L85 158 Z M10 83.5 L19.9 76.8 V90.4 Z M160 83.5 L150.4 76.8 V90.4 Z" fill="#dde6f0"/><path d="M64 20.5 C52 24 42 31 35.5 39.5" fill="none" stroke="#dde6f0" stroke-width="4.6"/><path d="M31 31.5 L31.6 43.4 L42.6 42.6 Z" fill="#dde6f0"/><path d="M106.5 20.5 C118.5 24 128.5 31 135 39.5" fill="none" stroke="#dde6f0" stroke-width="4.6"/><path d="M139.5 31.5 L138.9 43.4 L127.9 42.6 Z" fill="#dde6f0"/><path d="M52 50 Q60 44 100 42.5 Q108 43 113 50 L121.5 68 Q123 72 123 78 L122 110 Q121 116 114 118 L70 126 Q63 126.5 60 122 L49.5 103 Q48 99 48 94 V60 Q48 54 52 50 Z" fill="#dde6f0"/><path d="M64 52 Q80 48 98 48.5 Q104 49 106 53 L108 61 Q108 66 102 67.5 L84 71.5 Q76 72 72 67 L62 57.5 Q60.5 54 64 52 Z" fill="#fff"/><path d="M80 84 L110 78.5 Q116 78 116.5 84 L116.5 106 Q116 112 110 113.5 L82 119 Q76 119.5 75.5 113 L75 91 Q75 85.5 80 84 Z" fill="#fff"/><path d="M52 64 Q52 60 55 63 L64 78 Q66.5 82 66.5 87 L67 112 Q67 117 64 113 L54.5 98 Q52 94 52 90 Z" fill="#fff"/><circle cx="70.5" cy="78.5" r="5.4" fill="#fff"/><ellipse cx="116" cy="70.5" rx="3.4" ry="5" fill="#fff"/><ellipse cx="67" cy="122" rx="5" ry="2.2" fill="#fff"/><path d="M103.4 39.8 V48" stroke="#1d4fd8" stroke-width="1.3"/><path d="M103.4 48 V89.5" stroke="#8ab4e0" stroke-width=".9"/><path d="M103.4 89.5 L48 100.3" stroke="#b0b0b0" stroke-width=".8"/><path d="M48 100.3 L56 98.8 M63 97.4 L73.5 95.4" stroke="#d02020" stroke-width="1"/><path d="M103.4 89.5 L126.5 122.9" stroke="#a8a8a8" stroke-width=".9"/><path d="M114.8 106 L126.5 122.9" stroke="#1a9a1a" stroke-width="1.3"/><text x="103.2" y="36" font-family="Liberation Sans, sans-serif" font-size="12" fill="#0b3fd0" text-anchor="middle">Z</text><text x="38.6" y="107.4" font-family="Liberation Sans, sans-serif" font-size="12.5" fill="#cc1111" text-anchor="middle">X</text><text x="127" y="128.6" font-family="Liberation Sans, sans-serif" font-size="12.5" fill="#1a9a1a" text-anchor="middle">Y</text><text x="94" y="103.6" font-family="Liberation Sans, sans-serif" font-size="12" fill="#222" text-anchor="middle" transform="rotate(-9 94 99.4)" textLength="23.5" lengthAdjust="spacingAndGlyphs">Back</text><text x="86.2" y="61" font-family="Liberation Sans, sans-serif" font-size="7" fill="#333" text-anchor="middle" transform="rotate(187 86.2 58.6)" textLength="19" lengthAdjust="spacingAndGlyphs">Top</text><text x="57.5" y="88" font-family="Liberation Sans, sans-serif" font-size="6" fill="#555" text-anchor="middle" transform="rotate(68 57.5 86)" textLength="17" lengthAdjust="spacingAndGlyphs">Right</text></svg>
<svg style="left:1069px;top:220px" width="40" height="22" viewBox="0 0 40 22" ><defs><linearGradient id="gc1" x1="0" y1="0" x2="1" y2="0"><stop offset="0" stop-color="#8a8a8a"/><stop offset="1" stop-color="#c8c8c8"/></linearGradient></defs><path d="M2.4 5.2 L11.4 2.2 L19.6 4.6 L19.6 15 L11 19 L2.6 15.6 Z" fill="#fff" stroke="#444" stroke-width="1"/><path d="M2.6 5.4 L10.8 8.2 L10.8 18.8 L2.6 15.6 Z" fill="url(#gc1)"/><path d="M10.8 8.2 L19.4 4.8 V15 L10.8 18.8 Z" fill="#e9e9e9"/><path d="M28.6 8.4 H35.8 L32.2 12 Z" fill="#222"/></svg>
<div class="abs" style="left:1093px;top:342px;width:33px;height:199px;background:#f0f0f0;border:1px solid #c8c8c8"></div>
<div class="abs" style="left:1094px;top:409px;width:31px;height:32px;background:#fff"></div>
<div class="abs" style="left:1093px;top:375px;width:33px;height:1px;background:#c8c8c8"></div>
<div class="abs" style="left:1093px;top:408px;width:33px;height:1px;background:#c8c8c8"></div>
<div class="abs" style="left:1093px;top:441px;width:33px;height:1px;background:#c8c8c8"></div>
<div class="abs" style="left:1093px;top:474px;width:33px;height:1px;background:#c8c8c8"></div>
<div class="abs" style="left:1093px;top:507px;width:33px;height:1px;background:#c8c8c8"></div>
<div class="abs" style="left:1093px;top:551px;width:33px;height:67px;background:#f0f0f0;border:1px solid #c8c8c8"></div>
<div class="abs" style="left:1093px;top:584px;width:33px;height:1px;background:#c8c8c8"></div>
<div class="abs" style="left:1093px;top:541px;width:4.6px;height:10px;background:#fff"></div>
<svg style="left:1099px;top:349px" width="22" height="22" viewBox="0 0 22 22" ><rect x="2" y="2.4" width="17.4" height="17" rx="3" fill="#fff" stroke="#222" stroke-width="1.3"/><path d="M5.4 6.6 H14.4 M8 9.6 H16.4 M8 12.6 H16.4 M8 15.6 H16.4" stroke="#222" stroke-width="1.5"/><path d="M6.2 6.6 V15.6" stroke="#222" stroke-width="1"/></svg>
<svg style="left:1098px;top:381px" width="24" height="24" viewBox="0 0 24 24" ><path d="M6.6 10 L13.6 7 L21.4 10 V17.6 L13.8 21.2 L6.6 17.6 Z" fill="#fff" stroke="#222" stroke-width="1.2" stroke-linejoin="round"/><path d="M6.6 10 L13.8 13.2 L21.4 10 M13.8 13.2 V21.2" fill="none" stroke="#222" stroke-width="1.2"/><rect x="2.2" y="2.4" width="9.4" height="7.6" fill="#1d4fd8"/><path d="M2.2 5 H11.6 M2.2 7.5 H11.6 M5.3 2.4 V10 M8.5 2.4 V10" stroke="#fff" stroke-width=".8"/></svg>
<svg style="left:1098px;top:414px" width="24" height="24" viewBox="0 0 24 24" ><rect x="3" y="3.8" width="5" height="5" fill="#bbb" stroke="#555" stroke-width=".8"/><path d="M5.6 9.6 V11.6 H12.6" fill="none" stroke="#1d4fd8" stroke-width="1.1" stroke-dasharray="1.6 1.2"/><path d="M13.6 12.6 L15.8 9.6 H19.8 Q20.6 9.8 20.6 10.8 V19.6 Q20.4 20.6 19.4 20.6 H11.6 L9.6 18.6 V15.6 L11.6 13.6 H13.6 Z" fill="#fff" stroke="#444" stroke-width="1"/><path d="M13.6 13.6 V16.6 H9.8 M13.6 16.6 L17 16.6 V10 " fill="none" stroke="#666" stroke-width=".7"/></svg>
<svg style="left:1098px;top:447px" width="24" height="24" viewBox="0 0 24 24" ><rect x="3.4" y="14.4" width="14" height="6" fill="#fff" stroke="#222" stroke-width="1.1"/><rect x="13.6" y="3.4" width="7" height="16.4" rx="1" fill="none" stroke="#1d4fd8" stroke-width="1.1" stroke-dasharray="2 1.3"/><circle cx="17" cy="17.2" r="2.6" fill="#fff" stroke="#555" stroke-width="1"/><circle cx="17" cy="17.2" r="1" fill="#666"/></svg>
<svg style="left:1098px;top:480px" width="24" height="24" viewBox="0 0 24 24" ><path d="M10 3.6 L16.4 6 L18.2 12 L13.4 18.8 L6.4 17 L3.2 10.6 Z" fill="#8fb8d8"/><path d="M10 3.6 L11.4 11.4 L3.2 10.6 Z" fill="#b9d5ea"/><path d="M10 3.6 L16.4 6 L11.4 11.4 Z" fill="#d5e6f3"/><path d="M11.4 11.4 L6.4 17 L3.2 10.6 Z" fill="#6f9dc4"/><path d="M11.4 11.4 L13.4 18.8 L6.4 17 Z" fill="#4f86b6"/><path d="M11.4 11.4 L18.2 12 L16.4 6 Z" fill="#a5c8e2"/><rect x="13.4" y="13.6" width="7.6" height="6.8" fill="#222"/><path d="M15 13.6 V12 C15 9.6 19.4 9.6 19.4 12 V13.6" fill="none" stroke="#222" stroke-width="1.4"/><rect x="16.5" y="16" width="1.5" height="2" fill="#f0f0f0"/></svg>
<svg style="left:1098px;top:513px" width="24" height="24" viewBox="0 0 24 24" ><path d="M6.2 6 C3.2 10 3.2 16.6 6.2 21 M18.8 6 C21.8 10 21.8 16.6 18.8 21" fill="none" stroke="#222" stroke-width="1.9"/><text x="12.6" y="18.6" font-family="Liberation Serif, serif" font-style="italic" font-weight="bold" font-size="16" fill="#222" text-anchor="middle">x</text><rect x="4.8" y="3" width="9.8" height="7.2" fill="#222"/><path d="M4.8 5.4 H14.6 M4.8 7.8 H14.6 M8 3 V10.2 M11.3 3 V10.2" stroke="#f0f0f0" stroke-width=".7"/></svg>
<div class="abs" style="left:1098px;top:556px;width:23px;height:23px;background:#e4e4e4;border-radius:3px"></div>
<div class="abs" style="left:1099.5px;top:557.5px;width:20.5px;height:20.5px;background:#1c57e2;border:1.3px solid #111"></div>
<span class="t" style="left:1101.6px;top:559.00px;font-size:18px;line-height:21px;color:#fff;font-weight:bold;font-style:normal;font-family:'Liberation Serif',serif;transform:scaleX(0.589);transform-origin:0 100%">MK</span>
<svg style="left:1097px;top:588px" width="26" height="26" viewBox="0 0 26 26" ><rect x="1" y="1" width="23.4" height="23.6" rx="3.4" fill="#dcdcdc"/><path d="M4.4 13.6 C6 10.4 8.6 9 11 8.6" fill="none" stroke="#f0962a" stroke-width="1.7"/><path d="M11 8.6 C12.6 8.4 14.6 8.6 16 9.2" fill="none" stroke="#5cb85c" stroke-width="1.7"/><path d="M16 9.2 C18.6 10.2 20.4 12 21.4 14" fill="none" stroke="#5b9bd5" stroke-width="1.7"/><circle cx="12.8" cy="14" r="2.7" fill="#6e6e6e"/><path d="M12.8 14 L10 16.4" stroke="#6e6e6e" stroke-width="1.6"/></svg>

<div id="tabs">
</div>
<div class="abs" style="left:40px;top:901px;width:38px;height:31px;background:#d6d6d6"></div>
<svg style="left:47px;top:907px" width="20" height="20" viewBox="0 0 20 20" ><path d="M1.8 9.4 H17 M9.4 1.8 V17" stroke="#555" stroke-width="2.7"/></svg>
<div class="abs" style="left:78.7px;top:901px;width:200.6px;height:28.5px;background:#e9e9e9;border-radius:0 0 7px 7px;box-shadow:0 1px 1.5px rgba(0,0,0,.28)"></div>
<svg style="left:90.2px;top:905px" width="20" height="21" viewBox="0 0 20 21" ><g fill="#fff" stroke="#222" stroke-width="1.2" stroke-linejoin="round"><path d="M2 7.4 Q2 6.2 3.2 6.4 L8 7.2 V19.2 L3.2 18.4 Q2 18.2 2 17 Z"/><path d="M8 7.2 L10.4 5.8 V17.6 L8 19.2"/><path d="M9.6 3.2 Q9.6 1.8 11 1.9 L16 2.4 Q17.8 2.6 17.8 4.4 V17.4 Q17.8 19 16.2 19 L11 19.2 Q9.6 19.2 9.6 17.8 Z"/><path d="M15.4 2.6 V19" fill="none" stroke-width="1"/></g></svg>
<span class="t" style="left:112.5px;top:908.00px;font-size:14px;line-height:16px;color:#666;font-weight:normal;font-style:normal;transform:scaleX(1.016)">motormodule</span>
<div class="abs" style="left:280.7px;top:901px;width:200.6px;height:28.5px;background:#e9e9e9;border-radius:0 0 7px 7px;box-shadow:0 1px 1.5px rgba(0,0,0,.28)"></div>
<svg style="left:292.2px;top:905px" width="20" height="21" viewBox="0 0 20 21" ><g fill="#fff" stroke="#222" stroke-width="1.2" stroke-linejoin="round"><path d="M2 7.4 Q2 6.2 3.2 6.4 L8 7.2 V19.2 L3.2 18.4 Q2 18.2 2 17 Z"/><path d="M8 7.2 L10.4 5.8 V17.6 L8 19.2"/><path d="M9.6 3.2 Q9.6 1.8 11 1.9 L16 2.4 Q17.8 2.6 17.8 4.4 V17.4 Q17.8 19 16.2 19 L11 19.2 Q9.6 19.2 9.6 17.8 Z"/><path d="M15.4 2.6 V19" fill="none" stroke-width="1"/></g></svg>
<span class="t" style="left:314.5px;top:908.00px;font-size:14px;line-height:16px;color:#666;font-weight:normal;font-style:normal;transform:scaleX(0.981)">motormodule Copy 1</span>
<div class="abs" style="left:482.7px;top:901px;width:200.6px;height:28.5px;background:#e9e9e9;border-radius:0 0 7px 7px;box-shadow:0 1px 1.5px rgba(0,0,0,.28)"></div>
<svg style="left:494.2px;top:905px" width="20" height="21" viewBox="0 0 20 21" ><g fill="#fff" stroke="#222" stroke-width="1.2" stroke-linejoin="round"><path d="M2 7.4 Q2 6.2 3.2 6.4 L8 7.2 V19.2 L3.2 18.4 Q2 18.2 2 17 Z"/><path d="M8 7.2 L10.4 5.8 V17.6 L8 19.2"/><path d="M9.6 3.2 Q9.6 1.8 11 1.9 L16 2.4 Q17.8 2.6 17.8 4.4 V17.4 Q17.8 19 16.2 19 L11 19.2 Q9.6 19.2 9.6 17.8 Z"/><path d="M15.4 2.6 V19" fill="none" stroke-width="1"/></g></svg>
<span class="t" style="left:516.5px;top:908.00px;font-size:14px;line-height:16px;color:#666;font-weight:normal;font-style:normal;transform:scaleX(1.024)">electronicsmodule</span>
<div class="abs" style="left:684.7px;top:901px;width:200.6px;height:28.5px;background:#e9e9e9;border-radius:0 0 7px 7px;box-shadow:0 1px 1.5px rgba(0,0,0,.28)"></div>
<svg style="left:696.2px;top:905px" width="20" height="21" viewBox="0 0 20 21" ><g fill="#fff" stroke="#222" stroke-width="1.2" stroke-linejoin="round"><path d="M2 7.4 Q2 6.2 3.2 6.4 L8 7.2 V19.2 L3.2 18.4 Q2 18.2 2 17 Z"/><path d="M8 7.2 L10.4 5.8 V17.6 L8 19.2"/><path d="M9.6 3.2 Q9.6 1.8 11 1.9 L16 2.4 Q17.8 2.6 17.8 4.4 V17.4 Q17.8 19 16.2 19 L11 19.2 Q9.6 19.2 9.6 17.8 Z"/><path d="M15.4 2.6 V19" fill="none" stroke-width="1"/></g></svg>
<span class="t" style="left:718.5px;top:908.00px;font-size:14px;line-height:16px;color:#666;font-weight:normal;font-style:normal;transform:scaleX(1.020)">batterymodule</span>
<div class="abs" style="left:886.7px;top:901px;width:200.6px;height:28.5px;background:#f4f4f4;border-radius:0 0 7px 7px;box-shadow:0 1px 1.5px rgba(0,0,0,.28)"></div>
<div class="abs" style="left:888.7px;top:927.5px;width:196.6px;height:2px;background:#1c4fb8;border-radius:0 0 3px 3px"></div>
<svg style="left:898px;top:908px" width="15" height="15" viewBox="0 0 15 15" ><circle cx="7.5" cy="7.5" r="6.3" fill="#6f9fcb"/><circle cx="7.5" cy="7.5" r="2.5" fill="#fff"/><path d="M7.5 1.8 V4.2 M7.5 10.8 V13.2" stroke="#fff" stroke-width="1.3" stroke-dasharray="1 .7"/></svg>
<svg style="left:918px;top:906px" width="18" height="18" viewBox="0 0 18 18" ><path d="M1.3 2.4 Q1.3 1.2 2.6 1.2 H12 L16 4.4 V15.4 Q16 16.6 14.8 16.6 H5.4 L1.3 13.4 Z" fill="#fff" stroke="#333" stroke-width="1.1"/><path d="M5 4.8 H15.8 M5 4.8 V16.4 M5 4.8 L1.6 1.6" fill="none" stroke="#666" stroke-width=".8"/><rect x="3.2" y="3.4" width="8.4" height="8.2" fill="#8a8a8a"/></svg>
<span class="t" style="left:940.0px;top:908.00px;font-size:14px;line-height:16px;color:#222;font-weight:normal;font-style:normal;transform:scaleX(1.039)">fullassembly</span>
<div class="abs" style="left:1088.7px;top:901px;width:200.6px;height:28.5px;background:#e9e9e9;border-radius:0 0 7px 7px;box-shadow:0 1px 1.5px rgba(0,0,0,.28)"></div>
<svg style="left:1100.2px;top:905px" width="20" height="21" viewBox="0 0 20 21" ><g fill="#fff" stroke="#222" stroke-width="1.2" stroke-linejoin="round"><path d="M2 7.4 Q2 6.2 3.2 6.4 L8 7.2 V19.2 L3.2 18.4 Q2 18.2 2 17 Z"/><path d="M8 7.2 L10.4 5.8 V17.6 L8 19.2"/><path d="M9.6 3.2 Q9.6 1.8 11 1.9 L16 2.4 Q17.8 2.6 17.8 4.4 V17.4 Q17.8 19 16.2 19 L11 19.2 Q9.6 19.2 9.6 17.8 Z"/><path d="M15.4 2.6 V19" fill="none" stroke-width="1"/></g></svg>
<span class="t" style="left:1122.5px;top:908.00px;font-size:14px;line-height:16px;color:#666;font-weight:normal;font-style:normal;transform:scaleX(1.022)">batterymodule Copy 1</span>
<div id="taskbar"></div>
<div class="abs" style="left:47px;top:936px;width:287px;height:5px;background:#303234;border-top:1px solid #5a5a5a;border-left:1px solid #4a4a4a;border-right:1px solid #4a4a4a"></div>
<div class="abs" style="left:581px;top:936px;width:48px;height:5px;background:#4a5057"></div>

</div></body></html>
